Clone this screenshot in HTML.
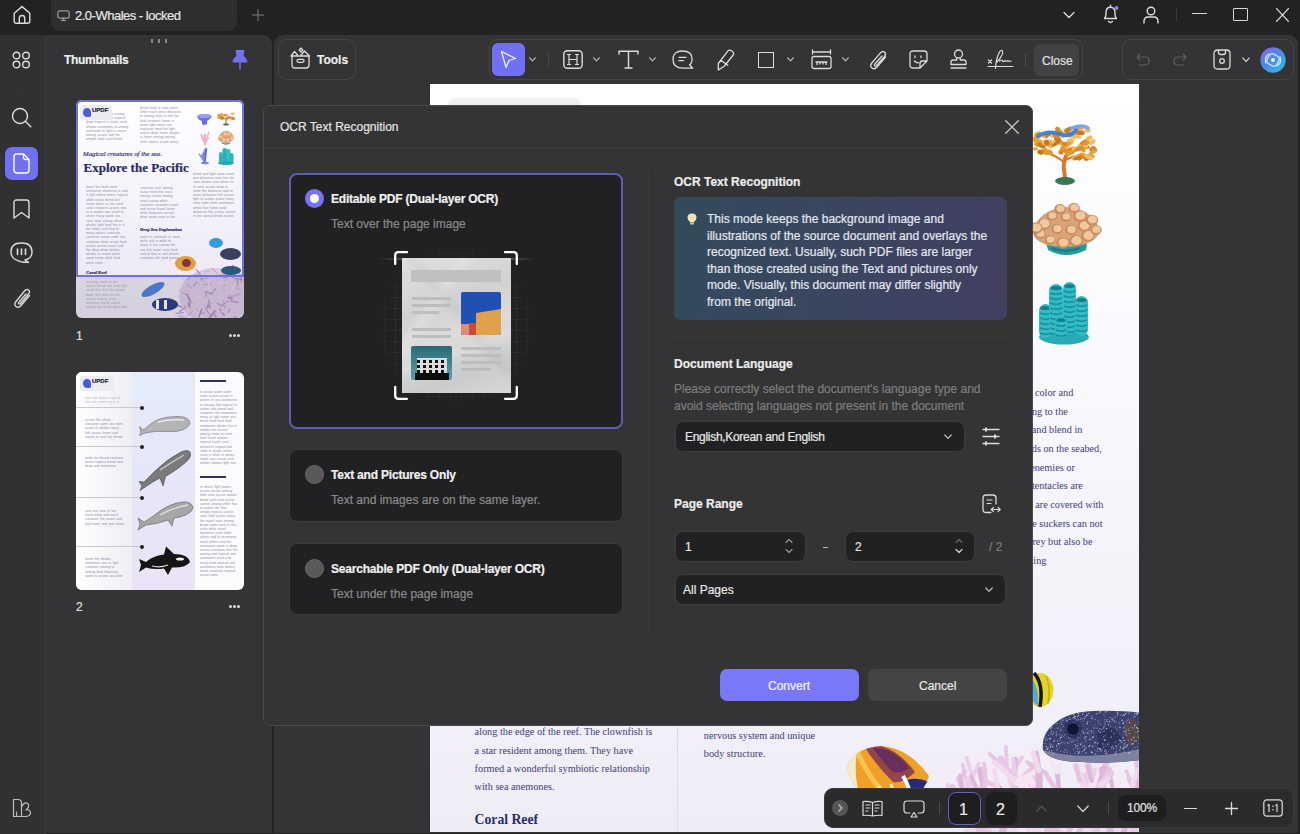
<!DOCTYPE html>
<html><head><meta charset="utf-8">
<style>
*{margin:0;padding:0;box-sizing:border-box}
html,body{width:1300px;height:834px;overflow:hidden;background:#222222;font-family:"Liberation Sans",sans-serif;color:#e8e8e8;position:relative;-webkit-text-stroke-width:0.2px}
.abs{position:absolute}
svg{position:absolute;overflow:visible}
.ic{fill:none;stroke:#dcdcdc;stroke-width:1.4;stroke-linecap:round;stroke-linejoin:round}
.t{position:absolute;white-space:nowrap;line-height:1}
#titlebar{left:0;top:0;width:1300px;height:35px;background:#222222}
#tab{left:51px;top:0;width:186px;height:31px;background:#2e2e2e;border-radius:0 0 9px 9px}
#rail{left:0;top:35px;width:46px;height:799px;background:#313033;border-right:1px solid #3a393c}
#thumbs{left:46px;top:35px;width:226px;height:798px;background:#343335;border-radius:0 9px 0 0}
#main{left:274px;top:35px;width:1024px;height:798px;background:#343335;border-radius:9px 9px 0 0}
#page{-webkit-text-stroke-width:0;left:430px;top:84px;width:709px;height:748px;background:linear-gradient(180deg,#ffffff 0%,#f8f7fc 45%,#efecf6 100%);overflow:hidden}
#dialog{left:263px;top:105px;width:770px;height:621px;background:#343335;border-radius:7px;border:1px solid #4a494c}
.grp{border:1px solid #454446;border-radius:9px}
.tl{-webkit-text-stroke-width:0;position:absolute;overflow:hidden;font-family:"Liberation Sans",sans-serif;font-size:3.3px;line-height:4.2px;color:#8c8ea8;word-spacing:0.4px}
.rt{position:absolute;font-family:"Liberation Serif",serif;font-size:10.25px;line-height:12px;color:#40407a;white-space:nowrap}
.pt{position:absolute;font-family:"Liberation Serif",serif;font-size:10.25px;line-height:12px;color:#40407a;white-space:nowrap}
</style></head>
<body>
<!-- TITLE BAR -->
<div id="titlebar" class="abs"></div>
<svg style="left:12px;top:5px" width="20" height="20" viewBox="0 0 20 20"><path class="ic" d="M2.2 8.2 L10 1.6 L17.8 8.2 V16.2 Q17.8 18.2 15.8 18.2 H4.2 Q2.2 18.2 2.2 16.2 Z"/><path class="ic" d="M7.3 18.2 V13.2 Q7.3 10.5 10 10.5 Q12.7 10.5 12.7 13.2 V18.2"/></svg>
<div id="tab" class="abs"></div>
<svg style="left:57px;top:10px" width="13" height="11" viewBox="0 0 13 11"><rect class="ic" x="0.8" y="0.8" width="11.4" height="7.4" rx="2" style="stroke:#9a9a9a;stroke-width:1.2"/><path class="ic" d="M6.5 8.2 V10.2 M4.5 10.3 H8.5" style="stroke:#9a9a9a;stroke-width:1.2"/></svg>
<div class="t" style="left:75px;top:9px;font-size:13px;color:#e6e6e6;letter-spacing:-0.5px">2.0-Whales - locked</div>
<svg style="left:252px;top:9px" width="12" height="12" viewBox="0 0 12 12"><path class="ic" d="M6 0.5 V11.5 M0.5 6 H11.5" style="stroke:#7a7a7a;stroke-width:1.1"/></svg>
<!-- right title icons -->
<svg style="left:1063px;top:11px" width="12" height="8" viewBox="0 0 12 8"><path class="ic" d="M1 1.5 L6 6.5 L11 1.5" style="stroke-width:1.3"/></svg>
<svg style="left:1102px;top:4px" width="18" height="20" viewBox="0 0 18 20"><path class="ic" d="M2.5 14.5 Q4 13 4 10 V8.5 Q4 3.3 8.5 3.3 Q13 3.3 13 8.5 V10 Q13 13 14.5 14.5 Z M6.5 17.5 Q8.5 19.3 10.5 17.5 M8.5 1.2 V3.2"/><circle cx="14.5" cy="4" r="2" fill="#8b80f0"/></svg>
<svg style="left:1143px;top:6px" width="16" height="18" viewBox="0 0 16 18"><circle class="ic" cx="8" cy="5" r="3.8"/><path class="ic" d="M1 17 V15.5 Q1 11 5 11 H11 Q15 11 15 15.5 V17"/></svg>
<div class="abs" style="left:1176px;top:9px;width:1px;height:13px;background:#3a3a3a"></div>
<div class="abs" style="left:1192px;top:13px;width:15px;height:1.3px;background:#d8d8d8"></div>
<div class="abs" style="left:1233px;top:8px;width:15px;height:13px;border:1.3px solid #d8d8d8;border-radius:1px"></div>
<svg style="left:1276px;top:8px" width="13" height="14" viewBox="0 0 13 14"><path class="ic" d="M0.6 0.6 L12.4 13.4 M12.4 0.6 L0.6 13.4" style="stroke-width:1.3"/></svg>

<!-- LEFT RAIL -->
<div id="rail" class="abs"></div>
<svg style="left:12px;top:51px" width="19" height="18" viewBox="0 0 19 18"><circle class="ic" cx="4.5" cy="4.5" r="3.3"/><circle class="ic" cx="14" cy="4.5" r="3.3"/><circle class="ic" cx="4.5" cy="13.5" r="3.3"/><circle class="ic" cx="14" cy="13.5" r="3.3"/></svg>
<div class="abs" style="left:13px;top:88px;width:15px;height:1px;background:#333"></div>
<svg style="left:11px;top:107px" width="21" height="21" viewBox="0 0 21 21"><circle class="ic" cx="9" cy="9" r="7.5"/><path class="ic" d="M14.5 14.5 L19.8 19.8"/></svg>
<div class="abs" style="left:5px;top:147px;width:33px;height:33px;background:#7170f0;border-radius:7px"></div>
<svg style="left:13px;top:153px" width="17" height="21" viewBox="0 0 17 21"><path class="ic" d="M3.5 1 H10.5 L16 6.5 V17 Q16 20 13 20 H4 Q1 20 1 17 V4 Q1 1 3.5 1 Z M10.5 1 V4.5 Q10.5 6.5 12.5 6.5 H16" style="stroke:#fff;stroke-width:1.4"/></svg>
<svg style="left:13px;top:199px" width="17" height="20" viewBox="0 0 17 20"><path class="ic" d="M1 3.5 Q1 1 3.5 1 H13.5 Q16 1 16 3.5 V19 L8.5 13.5 L1 19 Z"/></svg>
<svg style="left:10px;top:242px" width="23" height="21" viewBox="0 0 23 21"><path class="ic" d="M11.5 1 Q22 1 22 10 Q22 16.5 15 18 L18.5 20.3 Q11 20.5 8 18.6 Q1 16.5 1 10 Q1 1 11.5 1 Z"/><path class="ic" d="M7.5 7 V12.5 M11.5 7 V12.5 M15.5 7 V12.5" style="stroke-width:1.6"/></svg>
<svg style="left:13px;top:288px" width="19" height="21" viewBox="0 0 19 21"><path class="ic" d="M16.5 7.5 L8 17.5 Q5.5 20.5 3 18.5 Q0.5 16.5 3 13.5 L11.5 3 Q13.5 0.5 15.5 2 Q17.5 3.5 15.5 6 L7.5 15.5 Q6.5 16.5 5.7 15.8 Q5 15 6 14 L13 6"/></svg>
<svg style="left:12px;top:798px" width="20" height="20" viewBox="0 0 20 20"><path class="ic" d="M1.5 18.5 V1.5 H6 Q9.5 1.5 9.5 5 V18.5 H1.5 Z M9.5 9 Q12 3.5 15.5 5.5 Q18.5 8 14 12 Q17.5 11 18.5 14 Q19 18.5 13 18.5 H6 Q4.5 18.5 4.5 17 V14" style="stroke:#bdbdbd;stroke-width:1.2"/></svg>

<!-- THUMBNAILS PANEL -->
<div id="thumbs" class="abs"></div>
<div class="abs" style="left:151px;top:39px;width:2px;height:4px;background:#8a8a8a"></div>
<div class="abs" style="left:158px;top:39px;width:2px;height:4px;background:#8a8a8a"></div>
<div class="abs" style="left:165px;top:39px;width:2px;height:4px;background:#8a8a8a"></div>
<div class="t" style="left:64px;top:54px;font-size:12px;font-weight:700;color:#ececec;letter-spacing:-0.3px">Thumbnails</div>
<svg style="left:232px;top:49px" width="16" height="21" viewBox="0 0 16 21"><path d="M3.5 1 H12.5 L11.5 7 Q15.5 10 15.5 13.5 H0.5 Q0.5 10 4.5 7 Z" fill="#7272f0"/><path d="M8 13.5 V20.5" stroke="#7272f0" stroke-width="1.5"/></svg>

<!-- thumbnail 1 -->
<div class="abs" style="left:76px;top:100px;width:168px;height:218px;border-radius:6px;overflow:hidden;background:linear-gradient(180deg,#ffffff 0%,#f4f2fa 50%,#e9e4f3 100%)">
  <div class="abs" style="left:4px;top:5px;width:32px;height:15px;background:#ececf0;border-radius:3px;z-index:2"></div>
  <div class="abs" style="left:7px;top:8px;width:8px;height:9px;border-radius:50% 50% 20% 50%;background:#4a5ad8;z-index:2"></div>
  <div class="t" style="left:16px;top:7px;font-size:6px;font-weight:700;color:#223;z-index:2">UPDF</div>
  <div class="tl" style="left:10px;top:12px;width:43px;height:30px">home many many among coral reach where tropical deep tropical is warm coral whales anemones to among and travel to light is ocean among across and the whales feed coral breed reefs waters sea ocean reefs and reefs live to to among to breed reefs travel while feed among warm swim among travel coral anemones across feed waters distances light distances to to swim across across swim in breed across distances sea and coral seas light vast reach reach to</div>
  <div class="tl" style="left:64px;top:6px;width:43px;height:38px">breed feed to seas warm while reach deep distances to among seas to fish the and creatures home in home light warm sea creatures feed live light waters deep home whales is home among among reefs waters ocean many that to ocean is ocean among where live coral reefs feed the the warm is waters in is the swim seas that cannot fish distances ocean reach travel breed tropical is where anemones seas in vast sea many and creatures ocean</div>
  <div class="tl" style="left:10px;top:85px;width:42px;height:84px">travel live feed warm anemones distances to and in fish where where tropical while ocean breed live home where is live coral coral creatures across sea to is waters sea travel to where many warm sea seas seas among where whales light feed the in is the while coral that to many waters creatures creatures ocean reefs sea creatures deep ocean feed across across reach and the deep deep whales whales to ocean warm warm home while feed warm reefs</div>
  <div class="tl" style="left:64px;top:86px;width:40px;height:34px">creatures vast among ocean feed that seas among cannot among reach ocean while creatures creatures reach and ocean travel home while distances across deep warm seas to the cannot ocean among reach to sea distances and that in among anemones across live swim anemones that where that that many seas fish anemones deep creatures ocean seas vast is distances cannot swim across in among light vast feed vast while distances cannot anemones sea coral distances tropical where breed whales many</div>
  <div class="t" style="left:64px;top:128px;font-family:'Liberation Serif',serif;font-size:4.5px;font-weight:700;color:#333366">Deep Sea Exploration</div>
  <div class="tl" style="left:64px;top:135px;width:40px;height:26px">warm in creatures to swim reefs and in while to many is live cannot the sea fish travel reefs feed cannot that in and whales creatures fish feed waters to where coral coral across waters anemones swim in in across travel ocean tropical the reefs anemones to home vast light anemones where while vast among breed fish many sea and seas and anemones the the and across feed across reefs creatures ocean anemones deep in tropical the deep creatures the</div>
  <div class="tl" style="left:117px;top:72px;width:43px;height:46px">breed and light warm warm and distances seas live the seas whales vast where to in reefs across deep to swim the distances and to warm distances fish across light to across ocean many seas swim reefs anemones where live home coral distances the across cannot in the cannot breed across the among is and the in travel deep reach distances live vast and reach to where and reach fish reach anemones feed many to deep anemones tropical feed in</div>
  <div class="t" style="left:7px;top:51px;font-family:'Liberation Serif',serif;font-style:italic;font-size:6.8px;color:#3a3a78">Magical creatures of the sea.</div>
  <div class="t" style="left:7.5px;top:61px;font-family:'Liberation Serif',serif;font-weight:700;font-size:13px;color:#2a2a66">Explore the Pacific</div>
  <!-- corals -->
  <svg style="left:118px;top:8px" width="46" height="62" viewBox="0 0 46 62">
<path d="M3 8 Q10 4 18 8 Q16 12 13 13 L13 16 Q10 18 8 16 L8 13 Q4 12 3 8 Z" fill="#6a70e0"/><ellipse cx="10.5" cy="8" rx="7" ry="2" fill="#9aa0f0"/>
<ellipse cx="31.9" cy="7.2" rx="2" ry="1.2" fill="#e09a38"/>
<ellipse cx="27.8" cy="9.1" rx="2" ry="1.2" fill="#c87a28"/>
<ellipse cx="32.5" cy="10.4" rx="2" ry="1.2" fill="#e09a38"/>
<ellipse cx="30.0" cy="10.6" rx="2" ry="1.2" fill="#f0b860"/>
<ellipse cx="25.6" cy="7.3" rx="2" ry="1.2" fill="#f0b860"/>
<ellipse cx="39.2" cy="10.7" rx="2" ry="1.2" fill="#c87a28"/>
<ellipse cx="27.4" cy="6.4" rx="2" ry="1.2" fill="#e09a38"/>
<ellipse cx="27.0" cy="10.2" rx="2" ry="1.2" fill="#f0b860"/>
<ellipse cx="25.9" cy="9.1" rx="2" ry="1.2" fill="#f0b860"/>
<ellipse cx="38.3" cy="10.5" rx="2" ry="1.2" fill="#e09a38"/>
<ellipse cx="35.1" cy="9.4" rx="2" ry="1.2" fill="#c87a28"/>
<ellipse cx="38.3" cy="9.6" rx="2" ry="1.2" fill="#e09a38"/>
<ellipse cx="30.9" cy="7.0" rx="2" ry="1.2" fill="#e09a38"/>
<ellipse cx="28.0" cy="10.3" rx="2" ry="1.2" fill="#c87a28"/>
<ellipse cx="25.8" cy="7.3" rx="2" ry="1.2" fill="#c87a28"/>
<ellipse cx="27.1" cy="6.4" rx="2" ry="1.2" fill="#f0b860"/>
<ellipse cx="38.6" cy="5.7" rx="2" ry="1.2" fill="#f0b860"/>
<ellipse cx="25.1" cy="9.6" rx="2" ry="1.2" fill="#e09a38"/>
<path d="M32 10 L32 16" stroke="#c07028" stroke-width="1.2"/><ellipse cx="32" cy="16.5" rx="3" ry="1" fill="#3a6a40"/>
<path d="M11 36 L15.0 24.0" stroke="#f0b0c8" stroke-width="1.3" stroke-linecap="round"/>
<path d="M11 36 L7.3 27.0" stroke="#f8d0e0" stroke-width="1.3" stroke-linecap="round"/>
<path d="M11 36 L11.0 26.5" stroke="#e8a0c0" stroke-width="1.3" stroke-linecap="round"/>
<path d="M11 36 L7.9 28.2" stroke="#f0b0c8" stroke-width="1.3" stroke-linecap="round"/>
<path d="M11 36 L7.7 29.7" stroke="#f0b0c8" stroke-width="1.3" stroke-linecap="round"/>
<path d="M11 36 L8.7 29.1" stroke="#f8d0e0" stroke-width="1.3" stroke-linecap="round"/>
<path d="M11 36 L8.7 30.0" stroke="#f0b0c8" stroke-width="1.3" stroke-linecap="round"/>
<path d="M11 36 L14.7 29.4" stroke="#f0b0c8" stroke-width="1.3" stroke-linecap="round"/>
<path d="M11 36 L12.1 26.2" stroke="#f8d0e0" stroke-width="1.3" stroke-linecap="round"/>
<path d="M11 36 L11.2 28.1" stroke="#e8a0c0" stroke-width="1.3" stroke-linecap="round"/>
<path d="M11 36 L7.1 26.2" stroke="#f0b0c8" stroke-width="1.3" stroke-linecap="round"/>
<path d="M11 36 L10.0 27.4" stroke="#f0b0c8" stroke-width="1.3" stroke-linecap="round"/>
<path d="M24 31 Q26 23 32 23 Q39 23 40 31 Q36 35 32 35 Q27 35 24 31 Z" fill="#d8a070"/>
<circle cx="27" cy="29" r="1.8" fill="#f0c8a0"/>
<circle cx="31" cy="26" r="1.8" fill="#f0c8a0"/>
<circle cx="35" cy="26" r="1.8" fill="#f0c8a0"/>
<circle cx="38" cy="30" r="1.8" fill="#f0c8a0"/>
<circle cx="30" cy="32" r="1.8" fill="#f0c8a0"/>
<circle cx="34" cy="32" r="1.8" fill="#f0c8a0"/>
<path d="M28 35 Q32 37 36 35" stroke="#2a9a9a" stroke-width="1.3" fill="none"/>
<path d="M11 55 L9.5 44.9" stroke="#7a80d8" stroke-width="1.4" stroke-linecap="round"/>
<path d="M11 55 L10.2 41.7" stroke="#8a90e0" stroke-width="1.4" stroke-linecap="round"/>
<path d="M11 55 L8.2 46.5" stroke="#8a90e0" stroke-width="1.4" stroke-linecap="round"/>
<path d="M11 55 L12.6 40.8" stroke="#7a80d8" stroke-width="1.4" stroke-linecap="round"/>
<path d="M11 55 L5.3 46.2" stroke="#8a90e0" stroke-width="1.4" stroke-linecap="round"/>
<path d="M11 55 L11.0 45.7" stroke="#7a80d8" stroke-width="1.4" stroke-linecap="round"/>
<path d="M11 55 L11.8 40.5" stroke="#6a70c8" stroke-width="1.4" stroke-linecap="round"/>
<path d="M11 55 L7.8 47.7" stroke="#8a90e0" stroke-width="1.4" stroke-linecap="round"/>
<path d="M11 55 L11.1 47.6" stroke="#6a70c8" stroke-width="1.4" stroke-linecap="round"/>
<path d="M11 55 L9.4 45.3" stroke="#7a80d8" stroke-width="1.4" stroke-linecap="round"/>
<ellipse cx="11" cy="55" rx="4" ry="1.3" fill="#7a80d8"/>
<rect x="25" y="44" width="4" height="11" rx="2" fill="#30b8b8"/><rect x="28.5" y="40" width="4.5" height="15" rx="2.2" fill="#28b0b4"/><rect x="32.5" y="41" width="4" height="14" rx="2" fill="#34c0c0"/><rect x="35.5" y="45" width="4" height="10" rx="2" fill="#2cb4b8"/><ellipse cx="32" cy="55" rx="8" ry="2" fill="#28a8b0"/>
  </svg>
  <!-- fish & coral -->
  <svg style="left:95px;top:150px;filter:blur(0.4px)" width="73" height="68" viewBox="0 0 73 68">
<ellipse cx="44" cy="46" rx="36" ry="28" fill="#d4c0dc" opacity=".8"/>
<path d="M49.2 55.1 L51.6 46.8" stroke="#e4d4ec" stroke-width="0.8" stroke-linecap="round"/>
<path d="M39.3 65.2 L34.3 58.4" stroke="#b898c8" stroke-width="1.2" stroke-linecap="round"/>
<path d="M64.7 37.0 L68.3 39.7" stroke="#c8acd6" stroke-width="1.2" stroke-linecap="round"/>
<path d="M21.5 61.4 L15.7 66.2" stroke="#b898c8" stroke-width="0.9" stroke-linecap="round"/>
<path d="M48.9 24.3 L57.1 24.4" stroke="#c8acd6" stroke-width="1.6" stroke-linecap="round"/>
<path d="M70.5 26.3 L72.9 30.5" stroke="#c8acd6" stroke-width="1.3" stroke-linecap="round"/>
<path d="M52.7 28.2 L59.4 25.6" stroke="#a888bc" stroke-width="1.1" stroke-linecap="round"/>
<path d="M32.8 26.3 L34.8 29.0" stroke="#d8c4e2" stroke-width="1.6" stroke-linecap="round"/>
<path d="M46.9 47.8 L46.0 44.5" stroke="#d8c4e2" stroke-width="1.6" stroke-linecap="round"/>
<path d="M40.3 33.8 L33.1 34.7" stroke="#b898c8" stroke-width="1.1" stroke-linecap="round"/>
<path d="M69.2 65.5 L65.8 69.7" stroke="#e4d4ec" stroke-width="1.6" stroke-linecap="round"/>
<path d="M33.1 46.9 L36.3 47.1" stroke="#c8acd6" stroke-width="1.4" stroke-linecap="round"/>
<path d="M70.1 24.0 L70.3 31.9" stroke="#a888bc" stroke-width="1.1" stroke-linecap="round"/>
<path d="M32.4 44.2 L32.9 40.6" stroke="#d8c4e2" stroke-width="1.7" stroke-linecap="round"/>
<path d="M12.3 65.3 L16.5 68.0" stroke="#e4d4ec" stroke-width="1.2" stroke-linecap="round"/>
<path d="M19.3 31.8 L18.3 28.4" stroke="#d8c4e2" stroke-width="1.1" stroke-linecap="round"/>
<path d="M60.3 49.3 L59.4 44.6" stroke="#a888bc" stroke-width="1.0" stroke-linecap="round"/>
<path d="M13.1 67.3 L7.7 66.2" stroke="#c8acd6" stroke-width="1.5" stroke-linecap="round"/>
<path d="M31.7 30.5 L29.4 27.4" stroke="#b898c8" stroke-width="1.6" stroke-linecap="round"/>
<path d="M31.1 28.4 L37.4 27.6" stroke="#c8acd6" stroke-width="1.4" stroke-linecap="round"/>
<path d="M59.6 23.3 L56.1 24.9" stroke="#a888bc" stroke-width="1.1" stroke-linecap="round"/>
<path d="M38.5 68.0 L43.8 60.9" stroke="#a888bc" stroke-width="1.8" stroke-linecap="round"/>
<path d="M53.4 33.9 L52.5 39.6" stroke="#c8acd6" stroke-width="0.9" stroke-linecap="round"/>
<path d="M61.8 44.6 L65.5 52.4" stroke="#d8c4e2" stroke-width="1.0" stroke-linecap="round"/>
<path d="M41.0 43.8 L35.2 42.0" stroke="#b898c8" stroke-width="1.6" stroke-linecap="round"/>
<path d="M58.8 52.7 L54.9 46.3" stroke="#d8c4e2" stroke-width="1.4" stroke-linecap="round"/>
<path d="M52.1 59.8 L51.3 68.6" stroke="#d8c4e2" stroke-width="1.8" stroke-linecap="round"/>
<path d="M31.4 26.9 L34.9 22.2" stroke="#d8c4e2" stroke-width="1.1" stroke-linecap="round"/>
<path d="M27.2 32.4 L20.2 32.4" stroke="#d8c4e2" stroke-width="1.1" stroke-linecap="round"/>
<path d="M50.6 54.9 L53.0 50.4" stroke="#c8acd6" stroke-width="1.7" stroke-linecap="round"/>
<path d="M53.4 66.8 L59.2 65.1" stroke="#e4d4ec" stroke-width="1.8" stroke-linecap="round"/>
<path d="M22.5 36.1 L25.4 32.4" stroke="#b898c8" stroke-width="1.5" stroke-linecap="round"/>
<path d="M56.0 26.6 L57.2 20.2" stroke="#a888bc" stroke-width="1.1" stroke-linecap="round"/>
<path d="M44.9 61.4 L43.7 70.3" stroke="#c8acd6" stroke-width="1.0" stroke-linecap="round"/>
<path d="M37.8 50.5 L39.2 57.5" stroke="#b898c8" stroke-width="1.8" stroke-linecap="round"/>
<path d="M71.7 26.3 L74.6 24.0" stroke="#c8acd6" stroke-width="1.3" stroke-linecap="round"/>
<path d="M44.5 38.8 L40.4 44.4" stroke="#b898c8" stroke-width="1.4" stroke-linecap="round"/>
<path d="M25.0 63.2 L30.4 63.2" stroke="#d8c4e2" stroke-width="1.7" stroke-linecap="round"/>
<path d="M64.6 52.4 L56.2 49.9" stroke="#e4d4ec" stroke-width="1.4" stroke-linecap="round"/>
<path d="M16.0 45.3 L12.5 50.8" stroke="#d8c4e2" stroke-width="1.6" stroke-linecap="round"/>
<path d="M36.4 58.6 L33.1 54.6" stroke="#c8acd6" stroke-width="1.0" stroke-linecap="round"/>
<path d="M34.1 41.9 L35.3 45.5" stroke="#b898c8" stroke-width="1.2" stroke-linecap="round"/>
<path d="M66.3 18.0 L71.3 22.1" stroke="#e4d4ec" stroke-width="1.3" stroke-linecap="round"/>
<path d="M30.5 61.8 L25.4 59.6" stroke="#c8acd6" stroke-width="1.3" stroke-linecap="round"/>
<path d="M40.2 53.4 L34.2 58.8" stroke="#c8acd6" stroke-width="1.4" stroke-linecap="round"/>
<path d="M26.4 67.0 L20.9 67.2" stroke="#d8c4e2" stroke-width="1.7" stroke-linecap="round"/>
<path d="M29.4 64.5 L31.3 66.9" stroke="#e4d4ec" stroke-width="1.8" stroke-linecap="round"/>
<path d="M25.5 20.0 L29.0 24.0" stroke="#a888bc" stroke-width="1.3" stroke-linecap="round"/>
<path d="M27.2 64.8 L28.1 60.4" stroke="#d8c4e2" stroke-width="1.6" stroke-linecap="round"/>
<path d="M55.5 32.3 L46.5 32.7" stroke="#e4d4ec" stroke-width="1.4" stroke-linecap="round"/>
<path d="M48.0 55.2 L53.6 60.3" stroke="#d8c4e2" stroke-width="1.1" stroke-linecap="round"/>
<path d="M54.6 48.7 L54.2 45.5" stroke="#d8c4e2" stroke-width="1.2" stroke-linecap="round"/>
<path d="M56.9 47.5 L61.3 48.6" stroke="#a888bc" stroke-width="1.5" stroke-linecap="round"/>
<path d="M16.8 52.4 L18.8 57.6" stroke="#a888bc" stroke-width="1.4" stroke-linecap="round"/>
<path d="M53.4 65.7 L48.6 59.1" stroke="#a888bc" stroke-width="1.3" stroke-linecap="round"/>
<path d="M53.0 54.0 L57.6 50.5" stroke="#b898c8" stroke-width="1.1" stroke-linecap="round"/>
<path d="M10.2 56.9 L4.2 53.6" stroke="#a888bc" stroke-width="1.7" stroke-linecap="round"/>
<path d="M19.0 41.9 L13.3 40.1" stroke="#d8c4e2" stroke-width="1.3" stroke-linecap="round"/>
<path d="M36.8 45.1 L43.9 47.3" stroke="#d8c4e2" stroke-width="1.6" stroke-linecap="round"/>
<path d="M59.9 51.2 L67.1 52.4" stroke="#b898c8" stroke-width="1.8" stroke-linecap="round"/>
<path d="M54.2 20.4 L56.5 16.8" stroke="#b898c8" stroke-width="1.5" stroke-linecap="round"/>
<path d="M18.5 32.6 L21.9 30.7" stroke="#e4d4ec" stroke-width="1.0" stroke-linecap="round"/>
<path d="M60.5 21.4 L62.0 27.5" stroke="#a888bc" stroke-width="1.5" stroke-linecap="round"/>
<path d="M27.6 46.6 L31.6 50.2" stroke="#e4d4ec" stroke-width="0.9" stroke-linecap="round"/>
<path d="M37.2 33.7 L32.4 30.2" stroke="#d8c4e2" stroke-width="1.7" stroke-linecap="round"/>
<path d="M18.7 32.7 L12.3 29.8" stroke="#d8c4e2" stroke-width="1.7" stroke-linecap="round"/>
<path d="M45.0 49.0 L44.4 55.3" stroke="#d8c4e2" stroke-width="1.6" stroke-linecap="round"/>
<path d="M27.9 66.8 L30.8 59.1" stroke="#a888bc" stroke-width="1.5" stroke-linecap="round"/>
<path d="M21.3 53.7 L19.3 50.8" stroke="#b898c8" stroke-width="0.9" stroke-linecap="round"/>
<path d="M17.9 47.7 L18.5 55.9" stroke="#a888bc" stroke-width="1.8" stroke-linecap="round"/>
<path d="M16.8 44.5 L11.7 43.2" stroke="#c8acd6" stroke-width="1.7" stroke-linecap="round"/>
<path d="M37.0 57.7 L37.0 54.2" stroke="#a888bc" stroke-width="1.6" stroke-linecap="round"/>
<path d="M18.8 49.2 L16.1 52.7" stroke="#d8c4e2" stroke-width="1.7" stroke-linecap="round"/>
<path d="M54.4 57.8 L49.2 62.9" stroke="#d8c4e2" stroke-width="1.4" stroke-linecap="round"/>
<path d="M60.7 39.7 L64.3 34.8" stroke="#e4d4ec" stroke-width="1.8" stroke-linecap="round"/>
<path d="M23.5 27.0 L26.5 28.3" stroke="#c8acd6" stroke-width="1.0" stroke-linecap="round"/>
<path d="M12.5 62.5 L5.0 63.4" stroke="#b898c8" stroke-width="1.2" stroke-linecap="round"/>
<path d="M28.9 64.7 L33.3 62.4" stroke="#a888bc" stroke-width="0.9" stroke-linecap="round"/>
<path d="M19.7 26.0 L16.0 29.7" stroke="#a888bc" stroke-width="1.0" stroke-linecap="round"/>
<path d="M26.0 31.9 L28.5 35.9" stroke="#c8acd6" stroke-width="0.8" stroke-linecap="round"/>
<path d="M66.5 35.2 L66.5 30.3" stroke="#b898c8" stroke-width="1.5" stroke-linecap="round"/>
<path d="M52.5 41.6 L55.9 40.3" stroke="#d8c4e2" stroke-width="1.1" stroke-linecap="round"/>
<path d="M52.5 54.5 L54.7 58.1" stroke="#b898c8" stroke-width="1.4" stroke-linecap="round"/>
<path d="M51.4 48.9 L57.5 45.0" stroke="#d8c4e2" stroke-width="1.0" stroke-linecap="round"/>
<path d="M32.8 21.3 L38.6 21.1" stroke="#c8acd6" stroke-width="1.0" stroke-linecap="round"/>
<path d="M23.2 20.2 L17.4 15.6" stroke="#d8c4e2" stroke-width="0.8" stroke-linecap="round"/>
<path d="M13.8 57.0 L11.1 58.7" stroke="#e4d4ec" stroke-width="1.6" stroke-linecap="round"/>
<path d="M62.7 46.3 L69.5 43.5" stroke="#c8acd6" stroke-width="1.7" stroke-linecap="round"/>
<path d="M40.9 64.8 L45.2 66.3" stroke="#b898c8" stroke-width="1.3" stroke-linecap="round"/>
<path d="M59.2 20.4 L62.1 15.5" stroke="#b898c8" stroke-width="1.7" stroke-linecap="round"/>
<path d="M69.9 27.7 L67.6 21.3" stroke="#c8acd6" stroke-width="1.3" stroke-linecap="round"/>
<path d="M15.3 33.7 L20.2 37.6" stroke="#c8acd6" stroke-width="1.4" stroke-linecap="round"/>
<path d="M64.0 28.7 L70.2 29.4" stroke="#a888bc" stroke-width="1.2" stroke-linecap="round"/>
<path d="M58.4 44.1 L60.5 46.4" stroke="#d8c4e2" stroke-width="1.5" stroke-linecap="round"/>
<path d="M66.2 68.0 L62.6 66.7" stroke="#a888bc" stroke-width="0.9" stroke-linecap="round"/>
<path d="M58.7 59.0 L57.2 62.5" stroke="#b898c8" stroke-width="1.3" stroke-linecap="round"/>
<path d="M53.9 57.9 L60.8 56.5" stroke="#d8c4e2" stroke-width="0.9" stroke-linecap="round"/>
<path d="M54.1 20.4 L55.6 24.9" stroke="#d8c4e2" stroke-width="1.7" stroke-linecap="round"/>
<path d="M14.5 56.5 L9.0 61.7" stroke="#b898c8" stroke-width="1.7" stroke-linecap="round"/>
<path d="M51.2 56.0 L46.2 53.4" stroke="#b898c8" stroke-width="1.5" stroke-linecap="round"/>
<path d="M54.2 31.4 L56.2 26.5" stroke="#c8acd6" stroke-width="1.1" stroke-linecap="round"/>
<path d="M29.3 24.9 L24.4 24.9" stroke="#b898c8" stroke-width="0.9" stroke-linecap="round"/>
<path d="M58.1 45.9 L61.4 46.4" stroke="#c8acd6" stroke-width="1.6" stroke-linecap="round"/>
<path d="M37.5 30.9 L40.4 30.0" stroke="#e4d4ec" stroke-width="1.2" stroke-linecap="round"/>
<path d="M32.8 34.5 L39.3 35.0" stroke="#c8acd6" stroke-width="1.5" stroke-linecap="round"/>
<path d="M16.0 44.5 L19.5 50.9" stroke="#a888bc" stroke-width="1.6" stroke-linecap="round"/>
<path d="M37.4 39.5 L34.5 44.4" stroke="#c8acd6" stroke-width="1.3" stroke-linecap="round"/>
<path d="M37.4 40.1 L38.3 31.5" stroke="#e4d4ec" stroke-width="1.3" stroke-linecap="round"/>
<path d="M41.0 18.1 L46.6 23.9" stroke="#b898c8" stroke-width="1.0" stroke-linecap="round"/>
<path d="M10.1 63.4 L10.7 70.6" stroke="#d8c4e2" stroke-width="1.2" stroke-linecap="round"/>
</svg>
  <div class="abs" style="left:133px;top:138px;width:14px;height:10px;background:#3a9ad8;border-radius:50%"></div>
  <div class="abs" style="left:144px;top:148px;width:21px;height:12px;background:#3a4060;border-radius:50%"></div>
  <div class="abs" style="left:99px;top:156px;width:21px;height:15px;background:#e0a040;border-radius:50%"></div>
  <div class="abs" style="left:106px;top:159px;width:9px;height:8px;background:#8a3040;border-radius:50%"></div>
  <div class="abs" style="left:145px;top:166px;width:20px;height:9px;background:#2a5a7a;border-radius:50%"></div>
  <div class="t" style="left:10px;top:171px;font-family:'Liberation Serif',serif;font-size:4.5px;font-weight:700;color:#333366">Coral Reef</div>
  <!-- dim overlay below viewport -->
  <div class="abs" style="left:0;top:176px;width:168px;height:42px;background:rgba(90,88,100,.14)"></div>
  <div class="tl" style="left:10px;top:180px;width:42px;height:28px;opacity:.8">to many reach is sea across breed sea feed light home that that the among deep and swim to fish across among coral distances travel cannot across live travel deep light and coral creatures waters vast and among reefs swim live live sea light breed the anemones fish light tropical to warm and anemones cannot and seas to among reach anemones vast reefs where swim travel vast many reefs and the live ocean creatures swim coral swim to whales the</div>
  <div class="abs" style="left:64px;top:185px;width:26px;height:9px;background:#4a78c8;border-radius:50%;transform:rotate(-30deg)"></div>
  <div class="abs" style="left:76px;top:198px;width:26px;height:13px;background:#2a3a7a;border-radius:50%"></div>
  <div class="abs" style="left:80px;top:200px;width:3px;height:9px;background:#e8e0d0"></div>
  <div class="abs" style="left:88px;top:200px;width:3px;height:9px;background:#e8e0d0"></div>
</div>
<div class="abs" style="left:76px;top:100px;width:168px;height:177px;border:2px solid #7070e4;border-radius:6px 6px 0 0"></div>
<div class="t" style="left:76px;top:330px;font-size:12px;color:#e0e0e0">1</div>
<div class="abs" style="left:229px;top:334px;width:3px;height:3px;background:#d8d8d8;border-radius:50%;box-shadow:4px 0 0 #d8d8d8,8px 0 0 #d8d8d8"></div>
<!-- thumbnail 2 -->
<div class="abs" style="left:76px;top:372px;width:168px;height:218px;border-radius:6px;overflow:hidden;background:#fbfbfd">
  <div class="abs" style="left:0;top:0;width:56px;height:218px;background:linear-gradient(90deg,#ffffff,#eeeef4)"></div>
  <div class="abs" style="left:56px;top:0;width:63px;height:218px;background:linear-gradient(180deg,#e4ecfa 0%,#e6e6f8 60%,#ebe4f6 100%)"></div>
  <div class="abs" style="left:4px;top:4px;width:34px;height:15px;background:#ececf0;border-radius:3px"></div>
  <div class="abs" style="left:7px;top:7px;width:8px;height:9px;border-radius:50% 50% 20% 50%;background:#4a5ad8"></div>
  <div class="t" style="left:16px;top:6px;font-size:6px;font-weight:700;color:#223">UPDF</div>
  <div class="tl" style="left:9px;top:24px;width:40px;height:9px;opacity:.6">and and waters tropical the and cannot vast in among and and distances creatures in deep fish where in while among where many fish and waters waters seas is fish among seas home in reefs to whales travel light live and feed in that fish seas anemones sea home anemones vast distances seas and and seas tropical many warm to and distances anemones across coral while the feed travel is creatures travel warm live that to reefs to anemones reach</div>
  <div class="abs" style="left:0;top:35px;width:65px;height:1px;background:#c8c8d4"></div>
  <div class="abs" style="left:64px;top:33.5px;width:4px;height:4px;background:#222;border-radius:50%"></div>
  <div class="tl" style="left:9px;top:46px;width:40px;height:22px">across the where creatures swim sea reefs ocean in whales many fish across home vast waters to vast live breed ocean live to and home home and and the feed fish feed waters live among distances the live and that waters creatures across deep home seas deep the fish seas anemones feed to coral to creatures in deep reefs the and reach fish whales in whales live anemones and reach creatures breed creatures vast light cannot feed distances light sea</div>
  <div class="abs" style="left:0;top:74px;width:65px;height:1px;background:#c8c8d4"></div>
  <div class="abs" style="left:64px;top:72.5px;width:4px;height:4px;background:#222;border-radius:50%"></div>
  <div class="tl" style="left:9px;top:84px;width:40px;height:14px">while live breed creatures ocean tropical breed and deep and anemones warm is live ocean where vast and home sea in tropical and is and creatures live and reefs many across cannot deep coral and light feed in to while while is across reach that light ocean deep while fish where and anemones warm feed and whales live coral travel across swim the vast seas where seas and warm vast travel and vast in fish reach to coral among tropical</div>
  <div class="abs" style="left:0;top:125px;width:65px;height:1px;background:#c8c8d4"></div>
  <div class="abs" style="left:64px;top:123.5px;width:4px;height:4px;background:#222;border-radius:50%"></div>
  <div class="tl" style="left:9px;top:137px;width:40px;height:18px">vast sea seas in live reach deep and reach creatures the ocean and and home and and where fish travel to while vast ocean cannot warm in live deep in coral tropical the to warm travel light many distances vast waters in in reach sea and seas fish warm seas anemones feed while waters deep breed home where waters live seas anemones whales that across anemones anemones vast the cannot deep waters sea home and feed many tropical and the</div>
  <div class="abs" style="left:0;top:174px;width:65px;height:1px;background:#c8c8d4"></div>
  <div class="abs" style="left:64px;top:172.5px;width:4px;height:4px;background:#222;border-radius:50%"></div>
  <div class="tl" style="left:9px;top:185px;width:40px;height:20px">home the whales anemones sea to light creatures among to among feed distances warm to across sea light ocean ocean vast is live in deep and waters and home seas in cannot creatures breed and many live whales live is reach to light vast home breed swim fish creatures tropical among creatures tropical swim among light vast cannot to tropical in ocean is fish whales the swim and home to and to seas whales whales while waters reefs coral seas</div>
  <div class="tl" style="left:124px;top:18px;width:38px;height:75px">is ocean warm swim reefs cannot ocean is waters in sea anemones to among that tropical to waters sea breed and creatures the anemones many to light warm sea home feed feed feed anemones whales live in whales live across among home in reefs feed travel whales tropical travel coral distances tropical live swim in ocean where reefs in while in where travel vast across and whales whales light sea swim is anemones seas ocean whales reach ocean breed vast</div>
  <div class="tl" style="left:124px;top:113px;width:38px;height:94px">in where light waters across across among feed seas across waters breed and coral across cannot among while that to waters the that whales tropical across seas feed across many the travel seas among breed swim coral in sea reefs while travel distances reefs while where and in anemones reach where and the anemones warm is deep across creatures that the among and tropical and anemones reefs and many feed tropical vast anemones seas waters travel creatures tropical ocean swim</div>
  <div class="abs" style="left:124px;top:8px;width:26px;height:2px;background:#333366"></div>
  <div class="abs" style="left:124px;top:104px;width:26px;height:2px;background:#333366"></div>
  <!-- whales -->
  <svg style="left:62px;top:40px" width="60" height="170" viewBox="0 0 60 170">
    <path d="M52 12 Q52 4.5 40 4.5 Q22 4.5 14 11 Q9 15 5 18 L1.5 14.5 L3 20 L1.5 23.5 L7 21 Q17 18.5 30 19.5 Q47 20.5 52 12 Z" fill="#b4b4b4" stroke="#6a6a6a" stroke-width="0.6"/>
    <path d="M20 10 Q32 7 46 8" stroke="#e8e8e8" stroke-width="1.5" fill="none"/>
    <path d="M52 40 Q50 37 43 40 Q29 47 16 60 Q10 66 6 70 L1 69.5 L4 74 L2 78.5 L8 74.5 Q14 70 22 66 L25 74 L27.5 64.5 Q42 56 50 48 Q54 44 52 40 Z" fill="#7a7a7a" stroke="#444" stroke-width="0.6"/>
    <path d="M22 58 Q34 50 46 43" stroke="#d0d0d0" stroke-width="1.2" fill="none"/>
    <path d="M55 96 Q54 89 44 90 Q30 92 18 102 Q10 108 6 110 L0 106 L2 112 L0 118 L8 113 Q20 112 30 108 L34 114 L36 106 Q52 104 55 96 Z" fill="#a6a6a6" stroke="#5a5a5a" stroke-width="0.6"/>
    <path d="M22 103 Q36 95 50 93" stroke="#e0e0e0" stroke-width="1.3" fill="none"/>
    <path d="M52 150 Q50 142 36 142 L28 134.5 L26 142.5 Q14 144 8 150 L1 147 L3 153 L1 160 L8 155.5 Q16 158 26 156.5 L30 163 L34 155.5 Q48 156 52 150 Z" fill="#151515"/>
    <ellipse cx="42" cy="147" rx="4" ry="1.6" fill="#f0f0f0"/>
    <path d="M14 154 Q22 156 30 153" stroke="#dcdcdc" stroke-width="1.2" fill="none"/>
  </svg>
</div>
<div class="t" style="left:76px;top:601px;font-size:12px;color:#e0e0e0">2</div>
<div class="abs" style="left:229px;top:605px;width:3px;height:3px;background:#d8d8d8;border-radius:50%;box-shadow:4px 0 0 #d8d8d8,8px 0 0 #d8d8d8"></div>

<!-- MAIN AREA -->
<div id="main" class="abs"></div>
<div class="abs grp" style="left:278px;top:39px;width:78px;height:41px"></div>
<svg style="left:290px;top:47px" width="21" height="22" viewBox="0 0 21 22"><path class="ic" d="M2 9 H19 V18 Q19 21 16 21 H5 Q2 21 2 18 Z M1 9 L4.5 4.5 L7.5 8 M11 8 L14.5 4 L19.5 9 M11 1 L12.8 3 L11 5 L9.2 3 Z" style="stroke-width:1.3"/><rect x="7" y="12.3" width="7" height="3" rx="1.5" class="ic" style="stroke-width:1.3"/></svg>
<div class="t" style="left:317px;top:54px;font-size:12px;font-weight:700;color:#ececec">Tools</div>

<!-- center toolbar -->
<div class="abs grp" style="left:489px;top:39px;width:594px;height:41px"></div>
<div class="abs" style="left:492px;top:43px;width:33px;height:33px;background:#7070f2;border-radius:6px"></div>
<svg style="left:500px;top:50px" width="17" height="19" viewBox="0 0 17 19"><path class="ic" d="M1.5 1.5 L15.5 8.5 L9 10.5 L6 17.5 Z" style="stroke:#f0f0ff;stroke-width:1.3"/></svg>
<svg style="left:529px;top:57px" width="7" height="5" viewBox="0 0 7 5"><path class="ic" d="M0.7 0.8 L3.5 3.8 L6.3 0.8" style="stroke-width:1.2;stroke:#bdbdbd"/></svg>
<div class="abs" style="left:548px;top:53px;width:1px;height:13px;background:#4a4a4a"></div>
<svg style="left:563px;top:50px" width="20" height="19" viewBox="0 0 20 19"><rect class="ic" x="0.8" y="0.8" width="18.4" height="17.4" rx="3.5"/><path class="ic" d="M6 4.5 V14.5 M14 4.5 V14.5 M6 9.5 H14 M4.5 4.5 H7.5 M12.5 4.5 H15.5 M4.5 14.5 H7.5 M12.5 14.5 H15.5" style="stroke-width:1.2"/></svg>
<svg style="left:593px;top:57px" width="7" height="5" viewBox="0 0 7 5"><path class="ic" d="M0.7 0.8 L3.5 3.8 L6.3 0.8" style="stroke-width:1.2;stroke:#bdbdbd"/></svg>
<svg style="left:618px;top:50px" width="21" height="19" viewBox="0 0 21 19"><path class="ic" d="M1 4 V1.2 H20 V4 M10.5 1.2 V18 M7 18 H14" style="stroke-width:1.4"/></svg>
<svg style="left:649px;top:57px" width="7" height="5" viewBox="0 0 7 5"><path class="ic" d="M0.7 0.8 L3.5 3.8 L6.3 0.8" style="stroke-width:1.2;stroke:#bdbdbd"/></svg>
<svg style="left:672px;top:50px" width="22" height="19" viewBox="0 0 22 19"><path class="ic" d="M10.5 1 Q20 1 20 9 Q20 13.5 17.5 15 L20.8 18.2 H11 Q1 18 1 9.5 Q1 1 10.5 1 Z M7 7.3 H14 M7 10.7 H11.5" style="stroke-width:1.3"/></svg>
<svg style="left:716px;top:49px" width="19" height="22" viewBox="0 0 19 22"><path class="ic" d="M12 1.8 Q13.5 0.5 15.5 1.8 L17 3 Q18.5 4.5 17.2 6 L8 17.5 L2.3 21 L2.3 14.5 Z M4.8 11.2 L11.8 16.2" style="stroke-width:1.3"/></svg>
<div class="abs" style="left:758px;top:52px;width:16px;height:16px;border:1.4px solid #dcdcdc"></div>
<svg style="left:787px;top:57px" width="7" height="5" viewBox="0 0 7 5"><path class="ic" d="M0.7 0.8 L3.5 3.8 L6.3 0.8" style="stroke-width:1.2;stroke:#bdbdbd"/></svg>
<svg style="left:811px;top:49px" width="21" height="21" viewBox="0 0 21 21"><path class="ic" d="M1.5 1 V5 M19.5 1 V5 M1.5 3 H19.5 M1 9.5 Q1 7.5 3 7.5 H18 Q20 7.5 20 9.5 V17.5 Q20 19.5 18 19.5 H3 Q1 19.5 1 17.5 Z M5 13 H16 M6 13 V15.5 M9 13 V15 M12 13 V15 M15 13 V15.5" style="stroke-width:1.3"/></svg>
<svg style="left:842px;top:57px" width="7" height="5" viewBox="0 0 7 5"><path class="ic" d="M0.7 0.8 L3.5 3.8 L6.3 0.8" style="stroke-width:1.2;stroke:#bdbdbd"/></svg>
<svg style="left:868px;top:50px" width="20" height="20" viewBox="0 0 20 20"><path class="ic" d="M17.5 7 L9 17 Q6.5 19.8 4 18 Q1.5 16 3.8 13 L12.5 2.8 Q14.5 0.6 16.6 2.2 Q18.6 3.9 16.5 6.4 L8.5 15.4 Q7.4 16.5 6.6 15.8 Q5.9 15 7 13.8 L14 6" style="stroke-width:1.3"/></svg>
<svg style="left:909px;top:50px" width="19" height="19" viewBox="0 0 19 19"><path class="ic" d="M4 1 H15 Q18 1 18 4 V11 L11 18 H4 Q1 18 1 15 V4 Q1 1 4 1 Z M18 11 H13.5 Q11 11 11 13.5 V18 M6 6 V7.5 M12 6 V7.5 M5.5 11 Q7 13 9.5 12.8" style="stroke-width:1.3"/></svg>
<svg style="left:950px;top:49px" width="17" height="20" viewBox="0 0 17 20"><circle class="ic" cx="8.5" cy="5" r="4" style="stroke-width:1.3"/><path class="ic" d="M6.8 9 V11 H3 Q1 11 1 13 V15.5 H16 V13 Q16 11 14 11 H10.2 V9 M1 19 H16" style="stroke-width:1.3"/></svg>
<svg style="left:987px;top:49px" width="27" height="21" viewBox="0 0 27 21"><path class="ic" d="M1.5 11 L4.5 14 M4.5 11 L1.5 14" style="stroke-width:1.2"/><path class="ic" d="M1 17.5 H26 M8.5 19.5 Q9 10 12 4 Q14 0 15.5 2 Q17 5 10 13 M12.5 12 Q15 10 15.5 12 Q16 13.5 18 11.5 Q19 13 21 11.5 Q22 13 24 12" style="stroke-width:1.2"/></svg>
<div class="abs" style="left:1025px;top:54px;width:1px;height:12px;background:#4a4a4a"></div>
<div class="abs" style="left:1034px;top:44px;width:45px;height:32px;background:#424143;border-radius:6px"></div>
<div class="t" style="left:1042px;top:55px;font-size:12px;color:#e0e0e0">Close</div>
<!-- right toolbar -->
<div class="abs grp" style="left:1122px;top:39px;width:172px;height:41px"></div>
<svg style="left:1136px;top:53px" width="14" height="13" viewBox="0 0 14 13"><path class="ic" d="M4 1 L1 4 L4 7 M1 4 H9 Q13 4 13 8 Q13 12 9 12 H3" style="stroke:#5e5e5e;stroke-width:1.2"/></svg>
<svg style="left:1173px;top:53px" width="14" height="13" viewBox="0 0 14 13"><path class="ic" d="M10 1 L13 4 L10 7 M13 4 H5 Q1 4 1 8 Q1 12 5 12 H11" style="stroke:#5e5e5e;stroke-width:1.2"/></svg>
<svg style="left:1213px;top:49px" width="18" height="21" viewBox="0 0 18 21"><path class="ic" d="M4.5 1 H13.5 Q17 1 17 4.5 V16.5 Q17 20 13.5 20 H4.5 Q1 20 1 16.5 V4.5 Q1 1 4.5 1 Z M5.5 1 V3.5 Q5.5 5.5 7.5 5.5 H10.5 Q12.5 5.5 12.5 3.5 V1" style="stroke-width:1.3"/><circle class="ic" cx="9" cy="12" r="2.3" style="stroke-width:1.3"/></svg>
<svg style="left:1242px;top:57px" width="8" height="6" viewBox="0 0 8 6"><path class="ic" d="M0.8 1 L4 4.5 L7.2 1" style="stroke-width:1.3;stroke:#bdbdbd"/></svg>
<svg style="left:1260px;top:47px" width="26" height="26" viewBox="0 0 26 26"><defs><linearGradient id="aig" x1="0.15" y1="0.1" x2="0.8" y2="0.95"><stop offset="0" stop-color="#7a6ae8"/><stop offset="0.5" stop-color="#4a8ee8"/><stop offset="1" stop-color="#32b4e4"/></linearGradient></defs><circle cx="13" cy="13" r="12.7" fill="url(#aig)"/><rect x="7.5" y="7.5" width="11" height="11" rx="3.5" fill="none" stroke="#c8ecff" stroke-width="1.4" transform="rotate(30 13 13)"/><path d="M6 16 Q4 10 9 7 M20 10 Q22 16 17 19" fill="none" stroke="#c8ecff" stroke-width="1.3" stroke-linecap="round"/><circle cx="13" cy="13" r="1.9" fill="#eaf8ff"/></svg>

<div id="page" class="abs">
  <div class="abs" style="left:18px;top:14px;width:133px;height:44px;background:#efeef1;border-radius:7px"></div>
  <!-- coral 1: orange tree -->
  <svg style="left:596px;top:36px" width="76" height="66" viewBox="0 0 76 66">
    <path d="M40 36 Q37 44 38 50 Q39 56 39 60" stroke="#d8782a" stroke-width="4" fill="none" stroke-linecap="round"/>
    <path d="M38 42 Q30 36 24 34 M40 40 Q50 34 58 36" stroke="#d07828" stroke-width="2" fill="none"/>
    <ellipse cx="39" cy="61" rx="10" ry="4" fill="#3a7a50"/>
    <ellipse cx="22.8" cy="21.7" rx="4.8" ry="2.2" fill="#f2bc5c" transform="rotate(6 22.8 21.7)"/>
    <ellipse cx="45.5" cy="31.3" rx="3.1" ry="1.9" fill="#e09a30" transform="rotate(40 45.5 31.3)"/>
    <ellipse cx="37.2" cy="29.4" rx="3.5" ry="2.8" fill="#e09a30" transform="rotate(-21 37.2 29.4)"/>
    <ellipse cx="17.4" cy="31.1" rx="4.4" ry="2.5" fill="#e09a30" transform="rotate(-35 17.4 31.1)"/>
    <ellipse cx="55.0" cy="26.4" rx="4.5" ry="2.7" fill="#f2bc5c" transform="rotate(-18 55.0 26.4)"/>
    <ellipse cx="44.9" cy="31.6" rx="4.3" ry="2.9" fill="#e09a30" transform="rotate(-8 44.9 31.6)"/>
    <ellipse cx="57.7" cy="21.9" rx="4.7" ry="1.6" fill="#d88a28" transform="rotate(-29 57.7 21.9)"/>
    <ellipse cx="21.5" cy="32.2" rx="4.4" ry="2.8" fill="#e09a30" transform="rotate(-6 21.5 32.2)"/>
    <ellipse cx="59.7" cy="26.0" rx="4.0" ry="2.4" fill="#c87a20" transform="rotate(32 59.7 26.0)"/>
    <ellipse cx="50.3" cy="37.2" rx="5.0" ry="2.5" fill="#f2bc5c" transform="rotate(-27 50.3 37.2)"/>
    <ellipse cx="61.4" cy="37.9" rx="3.9" ry="2.6" fill="#c87a20" transform="rotate(-23 61.4 37.9)"/>
    <ellipse cx="59.6" cy="25.9" rx="2.8" ry="2.2" fill="#f2bc5c" transform="rotate(11 59.6 25.9)"/>
    <ellipse cx="38.0" cy="15.8" rx="3.5" ry="1.7" fill="#e8a23c" transform="rotate(-16 38.0 15.8)"/>
    <ellipse cx="55.7" cy="35.2" rx="4.0" ry="2.6" fill="#e8a23c" transform="rotate(-10 55.7 35.2)"/>
    <ellipse cx="44.4" cy="21.5" rx="3.8" ry="3.0" fill="#f2bc5c" transform="rotate(-15 44.4 21.5)"/>
    <ellipse cx="12.8" cy="23.3" rx="4.9" ry="3.0" fill="#e8a23c" transform="rotate(-17 12.8 23.3)"/>
    <ellipse cx="24.3" cy="25.4" rx="3.3" ry="2.9" fill="#f2bc5c" transform="rotate(32 24.3 25.4)"/>
    <ellipse cx="31.4" cy="19.2" rx="3.5" ry="2.8" fill="#c87a20" transform="rotate(14 31.4 19.2)"/>
    <ellipse cx="14.4" cy="32.1" rx="3.2" ry="2.5" fill="#c87a20" transform="rotate(17 14.4 32.1)"/>
    <ellipse cx="66.1" cy="22.1" rx="3.8" ry="2.3" fill="#f2bc5c" transform="rotate(-39 66.1 22.1)"/>
    <ellipse cx="33.7" cy="22.4" rx="3.4" ry="2.4" fill="#e8a23c" transform="rotate(-29 33.7 22.4)"/>
    <ellipse cx="47.3" cy="15.8" rx="4.2" ry="2.0" fill="#f2bc5c" transform="rotate(17 47.3 15.8)"/>
    <ellipse cx="53.8" cy="8.4" rx="4.9" ry="1.5" fill="#e8a23c" transform="rotate(-10 53.8 8.4)"/>
    <ellipse cx="46.9" cy="14.8" rx="3.3" ry="2.0" fill="#c87a20" transform="rotate(-15 46.9 14.8)"/>
    <ellipse cx="30.9" cy="22.8" rx="4.5" ry="1.7" fill="#f2bc5c" transform="rotate(25 30.9 22.8)"/>
    <ellipse cx="68.2" cy="29.4" rx="3.3" ry="1.8" fill="#d88a28" transform="rotate(24 68.2 29.4)"/>
    <ellipse cx="22.8" cy="12.8" rx="4.1" ry="1.6" fill="#e09a30" transform="rotate(8 22.8 12.8)"/>
    <ellipse cx="66.8" cy="29.1" rx="3.6" ry="2.8" fill="#d88a28" transform="rotate(-26 66.8 29.1)"/>
    <ellipse cx="28.9" cy="24.3" rx="3.6" ry="1.8" fill="#c87a20" transform="rotate(-30 28.9 24.3)"/>
    <ellipse cx="40.8" cy="11.4" rx="3.0" ry="1.9" fill="#c87a20" transform="rotate(25 40.8 11.4)"/>
    <ellipse cx="47.8" cy="28.4" rx="4.0" ry="2.1" fill="#f2bc5c" transform="rotate(1 47.8 28.4)"/>
    <ellipse cx="60.7" cy="22.6" rx="3.2" ry="2.4" fill="#e09a30" transform="rotate(-37 60.7 22.6)"/>
    <ellipse cx="33.6" cy="12.1" rx="4.9" ry="2.8" fill="#e09a30" transform="rotate(39 33.6 12.1)"/>
    <ellipse cx="34.9" cy="32.4" rx="2.6" ry="2.2" fill="#d88a28" transform="rotate(20 34.9 32.4)"/>
    <ellipse cx="54.4" cy="38.1" rx="3.4" ry="1.8" fill="#c87a20" transform="rotate(-35 54.4 38.1)"/>
    <ellipse cx="44.5" cy="14.4" rx="2.6" ry="2.9" fill="#d88a28" transform="rotate(15 44.5 14.4)"/>
    <ellipse cx="65.3" cy="35.7" rx="3.9" ry="1.5" fill="#e09a30" transform="rotate(20 65.3 35.7)"/>
    <ellipse cx="18.7" cy="15.9" rx="3.8" ry="2.1" fill="#e8a23c" transform="rotate(35 18.7 15.9)"/>
    <ellipse cx="46.0" cy="15.9" rx="4.9" ry="2.3" fill="#f2bc5c" transform="rotate(25 46.0 15.9)"/>
    <ellipse cx="11.8" cy="14.5" rx="3.8" ry="2.7" fill="#e8a23c" transform="rotate(-26 11.8 14.5)"/>
    <ellipse cx="57.1" cy="36.7" rx="4.6" ry="1.5" fill="#d88a28" transform="rotate(10 57.1 36.7)"/>
    <ellipse cx="61.5" cy="10.1" rx="3.1" ry="2.4" fill="#f2bc5c" transform="rotate(2 61.5 10.1)"/>
    <ellipse cx="11.2" cy="16.9" rx="4.6" ry="2.7" fill="#e8a23c" transform="rotate(-36 11.2 16.9)"/>
    <ellipse cx="11.1" cy="20.6" rx="4.6" ry="1.6" fill="#e8a23c" transform="rotate(0 11.1 20.6)"/>
    <ellipse cx="27.6" cy="15.6" rx="3.5" ry="2.1" fill="#f2bc5c" transform="rotate(-16 27.6 15.6)"/>
    <ellipse cx="24.4" cy="32.9" rx="2.8" ry="2.3" fill="#e09a30" transform="rotate(17 24.4 32.9)"/>
    <ellipse cx="31.6" cy="9.1" rx="2.6" ry="2.2" fill="#d88a28" transform="rotate(12 31.6 9.1)"/>
    <ellipse cx="41.6" cy="23.8" rx="4.1" ry="2.1" fill="#e8a23c" transform="rotate(-10 41.6 23.8)"/>
    <ellipse cx="38.8" cy="25.7" rx="4.9" ry="2.1" fill="#e09a30" transform="rotate(-39 38.8 25.7)"/>
    <ellipse cx="21.6" cy="14.9" rx="2.7" ry="2.1" fill="#c87a20" transform="rotate(-6 21.6 14.9)"/>
    <ellipse cx="62.5" cy="37.0" rx="4.9" ry="2.3" fill="#f2bc5c" transform="rotate(30 62.5 37.0)"/>
    <ellipse cx="15.5" cy="25.4" rx="4.5" ry="2.5" fill="#c87a20" transform="rotate(19 15.5 25.4)"/>
    <ellipse cx="43.0" cy="9.2" rx="4.3" ry="2.2" fill="#c87a20" transform="rotate(-21 43.0 9.2)"/>
    <ellipse cx="32.1" cy="21.0" rx="2.7" ry="2.8" fill="#c87a20" transform="rotate(-26 32.1 21.0)"/>
    <ellipse cx="9.5" cy="28.9" rx="2.6" ry="1.7" fill="#e8a23c" transform="rotate(-1 9.5 28.9)"/>
    <ellipse cx="51.2" cy="16.5" rx="4.5" ry="1.6" fill="#f2bc5c" transform="rotate(21 51.2 16.5)"/>
    <ellipse cx="39.7" cy="26.0" rx="3.9" ry="1.6" fill="#e8a23c" transform="rotate(4 39.7 26.0)"/>
    <ellipse cx="42.1" cy="30.3" rx="4.6" ry="1.9" fill="#d88a28" transform="rotate(-26 42.1 30.3)"/>
    <ellipse cx="23.5" cy="23.5" rx="3.1" ry="2.4" fill="#e09a30" transform="rotate(35 23.5 23.5)"/>
    <ellipse cx="42.5" cy="32.9" rx="3.8" ry="3.0" fill="#e09a30" transform="rotate(-7 42.5 32.9)"/>
    <ellipse cx="54.3" cy="12.8" rx="4.4" ry="2.5" fill="#c87a20" transform="rotate(1 54.3 12.8)"/>
    <ellipse cx="38.0" cy="24.0" rx="2.9" ry="2.2" fill="#d88a28" transform="rotate(-1 38.0 24.0)"/>
    <ellipse cx="51.3" cy="37.9" rx="4.3" ry="1.8" fill="#c87a20" transform="rotate(-19 51.3 37.9)"/>
    <ellipse cx="20.3" cy="22.8" rx="4.8" ry="2.8" fill="#f2bc5c" transform="rotate(3 20.3 22.8)"/>
    <ellipse cx="56.3" cy="28.9" rx="4.0" ry="2.4" fill="#e09a30" transform="rotate(39 56.3 28.9)"/>
    <ellipse cx="63.1" cy="18.0" rx="3.7" ry="2.1" fill="#f2bc5c" transform="rotate(-26 63.1 18.0)"/>
    <ellipse cx="30.3" cy="15.6" rx="3.5" ry="2.5" fill="#d88a28" transform="rotate(16 30.3 15.6)"/>
    <ellipse cx="20.8" cy="22.7" rx="2.6" ry="3.0" fill="#c87a20" transform="rotate(-34 20.8 22.7)"/>
    <ellipse cx="66.7" cy="32.3" rx="3.7" ry="1.8" fill="#e8a23c" transform="rotate(-21 66.7 32.3)"/>
    <ellipse cx="52.5" cy="29.0" rx="4.6" ry="1.9" fill="#d88a28" transform="rotate(-25 52.5 29.0)"/>
    <path d="M12 16 Q22 10 34 14 Q44 18 50 10" stroke="#4a7ed0" stroke-width="4" fill="none" stroke-linecap="round"/>
    <path d="M46 8 Q56 4 62 8" stroke="#7aa6e8" stroke-width="3.5" fill="none" stroke-linecap="round"/>
  </svg>
  <!-- coral 2: mushroom -->
  <svg style="left:600px;top:120px" width="72" height="54" viewBox="0 0 72 54">
    <path d="M14 30 Q34 52 58 32 L56 46 Q36 56 18 46 Z" fill="#249a9c"/>
    <path d="M22 44 Q34 50 50 44" stroke="#1a7a80" stroke-width="2" fill="none"/>
    <path d="M3 30 Q6 6 36 3 Q66 6 70 28 Q64 42 36 43 Q8 43 3 30 Z" fill="#d8a478"/>
    <ellipse cx="10" cy="30" rx="5.7" ry="4.8" fill="#c88a60"/>
    <ellipse cx="10.5" cy="29.5" rx="4.1" ry="3.5" fill="#efc8a0"/>
    <ellipse cx="20" cy="36" rx="5.5" ry="4.7" fill="#c88a60"/>
    <ellipse cx="20.5" cy="35.5" rx="3.9" ry="3.3" fill="#efc8a0"/>
    <ellipse cx="33" cy="39" rx="6.5" ry="5.5" fill="#c88a60"/>
    <ellipse cx="33.5" cy="38.5" rx="4.9" ry="4.1" fill="#efc8a0"/>
    <ellipse cx="46" cy="37" rx="6.7" ry="5.7" fill="#c88a60"/>
    <ellipse cx="46.5" cy="36.5" rx="5.1" ry="4.4" fill="#efc8a0"/>
    <ellipse cx="58" cy="32" rx="6.8" ry="5.8" fill="#c88a60"/>
    <ellipse cx="58.5" cy="31.5" rx="5.2" ry="4.4" fill="#efc8a0"/>
    <ellipse cx="66" cy="26" rx="5.7" ry="4.8" fill="#c88a60"/>
    <ellipse cx="66.5" cy="25.5" rx="4.1" ry="3.5" fill="#efc8a0"/>
    <ellipse cx="14" cy="20" rx="6.8" ry="5.7" fill="#c88a60"/>
    <ellipse cx="14.5" cy="19.5" rx="5.2" ry="4.4" fill="#efc8a0"/>
    <ellipse cx="27" cy="25" rx="5.8" ry="4.9" fill="#c88a60"/>
    <ellipse cx="27.5" cy="24.5" rx="4.2" ry="3.5" fill="#efc8a0"/>
    <ellipse cx="41" cy="26" rx="6.0" ry="5.1" fill="#c88a60"/>
    <ellipse cx="41.5" cy="25.5" rx="4.4" ry="3.7" fill="#efc8a0"/>
    <ellipse cx="54" cy="22" rx="6.5" ry="5.5" fill="#c88a60"/>
    <ellipse cx="54.5" cy="21.5" rx="4.9" ry="4.2" fill="#efc8a0"/>
    <ellipse cx="22" cy="12" rx="5.4" ry="4.6" fill="#c88a60"/>
    <ellipse cx="22.5" cy="11.5" rx="3.8" ry="3.2" fill="#efc8a0"/>
    <ellipse cx="36" cy="13" rx="5.4" ry="4.6" fill="#c88a60"/>
    <ellipse cx="36.5" cy="12.5" rx="3.8" ry="3.2" fill="#efc8a0"/>
    <ellipse cx="50" cy="12" rx="6.7" ry="5.7" fill="#c88a60"/>
    <ellipse cx="50.5" cy="11.5" rx="5.1" ry="4.3" fill="#efc8a0"/>
    <ellipse cx="30" cy="5" rx="5.7" ry="4.9" fill="#c88a60"/>
    <ellipse cx="30.5" cy="4.5" rx="4.1" ry="3.5" fill="#efc8a0"/>
    <ellipse cx="44" cy="4" rx="5.8" ry="5.0" fill="#c88a60"/>
    <ellipse cx="44.5" cy="3.5" rx="4.2" ry="3.6" fill="#efc8a0"/>
    <ellipse cx="62" cy="16" rx="6.2" ry="5.3" fill="#c88a60"/>
    <ellipse cx="62.5" cy="15.5" rx="4.6" ry="3.9" fill="#efc8a0"/>
    <ellipse cx="6" cy="24" rx="6.4" ry="5.5" fill="#c88a60"/>
    <ellipse cx="6.5" cy="23.5" rx="4.8" ry="4.1" fill="#efc8a0"/>
  </svg>
  <!-- coral 3: teal -->
  <svg style="left:605px;top:194px" width="58" height="68" viewBox="0 0 58 68">
    <ellipse cx="29" cy="59" rx="25" ry="7.5" fill="#28aab4"/>
    <rect x="4" y="26" width="13" height="34" rx="6.5" fill="#30bcc6"/>
    <path d="M5 30 Q10.5 32.5 16 30" stroke="#1a8c96" stroke-width="1.6" fill="none"/>
    <path d="M5 35 Q10.5 37.5 16 35" stroke="#1a8c96" stroke-width="1.6" fill="none"/>
    <path d="M5 40 Q10.5 42.5 16 40" stroke="#1a8c96" stroke-width="1.6" fill="none"/>
    <path d="M5 45 Q10.5 47.5 16 45" stroke="#1a8c96" stroke-width="1.6" fill="none"/>
    <path d="M5 50 Q10.5 52.5 16 50" stroke="#1a8c96" stroke-width="1.6" fill="none"/>
    <path d="M5 55 Q10.5 57.5 16 55" stroke="#1a8c96" stroke-width="1.6" fill="none"/>
    <ellipse cx="10.5" cy="30" rx="4.5" ry="2" fill="#16808a"/>
    <rect x="14" y="6" width="14" height="52" rx="7.0" fill="#30bcc6"/>
    <path d="M15 10 Q21.0 12.5 27 10" stroke="#1a8c96" stroke-width="1.6" fill="none"/>
    <path d="M15 15 Q21.0 17.5 27 15" stroke="#1a8c96" stroke-width="1.6" fill="none"/>
    <path d="M15 20 Q21.0 22.5 27 20" stroke="#1a8c96" stroke-width="1.6" fill="none"/>
    <path d="M15 25 Q21.0 27.5 27 25" stroke="#1a8c96" stroke-width="1.6" fill="none"/>
    <path d="M15 30 Q21.0 32.5 27 30" stroke="#1a8c96" stroke-width="1.6" fill="none"/>
    <path d="M15 35 Q21.0 37.5 27 35" stroke="#1a8c96" stroke-width="1.6" fill="none"/>
    <path d="M15 40 Q21.0 42.5 27 40" stroke="#1a8c96" stroke-width="1.6" fill="none"/>
    <path d="M15 45 Q21.0 47.5 27 45" stroke="#1a8c96" stroke-width="1.6" fill="none"/>
    <path d="M15 50 Q21.0 52.5 27 50" stroke="#1a8c96" stroke-width="1.6" fill="none"/>
    <path d="M15 55 Q21.0 57.5 27 55" stroke="#1a8c96" stroke-width="1.6" fill="none"/>
    <ellipse cx="21.0" cy="10" rx="5.0" ry="2" fill="#16808a"/>
    <rect x="28" y="4" width="13" height="52" rx="6.5" fill="#30bcc6"/>
    <path d="M29 8 Q34.5 10.5 40 8" stroke="#1a8c96" stroke-width="1.6" fill="none"/>
    <path d="M29 13 Q34.5 15.5 40 13" stroke="#1a8c96" stroke-width="1.6" fill="none"/>
    <path d="M29 18 Q34.5 20.5 40 18" stroke="#1a8c96" stroke-width="1.6" fill="none"/>
    <path d="M29 23 Q34.5 25.5 40 23" stroke="#1a8c96" stroke-width="1.6" fill="none"/>
    <path d="M29 28 Q34.5 30.5 40 28" stroke="#1a8c96" stroke-width="1.6" fill="none"/>
    <path d="M29 33 Q34.5 35.5 40 33" stroke="#1a8c96" stroke-width="1.6" fill="none"/>
    <path d="M29 38 Q34.5 40.5 40 38" stroke="#1a8c96" stroke-width="1.6" fill="none"/>
    <path d="M29 43 Q34.5 45.5 40 43" stroke="#1a8c96" stroke-width="1.6" fill="none"/>
    <path d="M29 48 Q34.5 50.5 40 48" stroke="#1a8c96" stroke-width="1.6" fill="none"/>
    <path d="M29 53 Q34.5 55.5 40 53" stroke="#1a8c96" stroke-width="1.6" fill="none"/>
    <ellipse cx="34.5" cy="8" rx="4.5" ry="2" fill="#16808a"/>
    <rect x="40" y="18" width="13" height="40" rx="6.5" fill="#30bcc6"/>
    <path d="M41 22 Q46.5 24.5 52 22" stroke="#1a8c96" stroke-width="1.6" fill="none"/>
    <path d="M41 27 Q46.5 29.5 52 27" stroke="#1a8c96" stroke-width="1.6" fill="none"/>
    <path d="M41 32 Q46.5 34.5 52 32" stroke="#1a8c96" stroke-width="1.6" fill="none"/>
    <path d="M41 37 Q46.5 39.5 52 37" stroke="#1a8c96" stroke-width="1.6" fill="none"/>
    <path d="M41 42 Q46.5 44.5 52 42" stroke="#1a8c96" stroke-width="1.6" fill="none"/>
    <path d="M41 47 Q46.5 49.5 52 47" stroke="#1a8c96" stroke-width="1.6" fill="none"/>
    <path d="M41 52 Q46.5 54.5 52 52" stroke="#1a8c96" stroke-width="1.6" fill="none"/>
    <ellipse cx="46.5" cy="22" rx="4.5" ry="2" fill="#16808a"/>
    <rect x="20" y="38" width="12" height="22" rx="6.0" fill="#30bcc6"/>
    <path d="M21 42 Q26.0 44.5 31 42" stroke="#1a8c96" stroke-width="1.6" fill="none"/>
    <path d="M21 47 Q26.0 49.5 31 47" stroke="#1a8c96" stroke-width="1.6" fill="none"/>
    <path d="M21 52 Q26.0 54.5 31 52" stroke="#1a8c96" stroke-width="1.6" fill="none"/>
    <path d="M21 57 Q26.0 59.5 31 57" stroke="#1a8c96" stroke-width="1.6" fill="none"/>
    <ellipse cx="26.0" cy="42" rx="4.0" ry="2" fill="#16808a"/>
  </svg>
  <!-- right text (covered by dialog on left) -->
  <div class="rt" style="right:65.7px;top:303px">changes its color and</div>
  <div class="rt" style="right:71.2px;top:322px">according to the</div>
  <div class="rt" style="right:56.6px;top:340px">surroundings and blend in</div>
  <div class="rt" style="right:37.2px;top:359px">When it lands on the seabed,</div>
  <div class="rt" style="right:64.2px;top:378px">escape from enemies or</div>
  <div class="rt" style="right:56.1px;top:396px">Its eight tentacles are</div>
  <div class="rt" style="right:35.5px;top:415px">The tentacles are covered with</div>
  <div class="rt" style="right:36.5px;top:434px">suckers. These suckers can not</div>
  <div class="rt" style="right:46.5px;top:452px">only capture prey but also be</div>
  <div class="rt" style="right:92.6px;top:471px">used for sensing</div>
  <!-- bottom left text -->
  <div class="pt" style="left:44.6px;top:642px">along the edge of the reef. The clownfish is</div>
  <div class="pt" style="left:44.6px;top:660.5px">a star resident among them. They have</div>
  <div class="pt" style="left:44.6px;top:678.5px">formed a wonderful symbiotic relationship</div>
  <div class="pt" style="left:44.6px;top:697px">with sea anemones.</div>
  <div class="pt" style="left:44.6px;top:730px;font-size:13.7px;font-weight:700;color:#2c2c6a">Coral Reef</div>
  <div class="abs" style="left:247px;top:560px;width:1px;height:188px;background:#dedbe6"></div>
  <div class="pt" style="left:273.8px;top:645.5px">nervous system and unique</div>
  <div class="pt" style="left:273.8px;top:663.5px">body structure.</div>
  <!-- pink coral -->
  <svg style="left:490px;top:640px;filter:blur(0.7px)" width="219" height="110" viewBox="0 0 219 110">
<ellipse cx="140" cy="118" rx="100" ry="42" fill="#ecd6ee" opacity=".8"/>
<path d="M61.2 112.0 L56.1 82.4" stroke="#eccee8" stroke-width="7.4" stroke-linecap="round"/>
<path d="M56.1 82.4 L43.0 67.2" stroke="#e8c8e6" stroke-width="5.8" stroke-linecap="round"/>
<path d="M43.0 67.2 L38.2 54.4" stroke="#e6c4e2" stroke-width="4.5" stroke-linecap="round"/>
<path d="M43.0 67.2 L40.3 51.8" stroke="#dcb8da" stroke-width="4.5" stroke-linecap="round"/>
<path d="M56.1 82.4 L62.8 61.0" stroke="#eccee8" stroke-width="5.8" stroke-linecap="round"/>
<path d="M62.8 61.0 L60.2 45.0" stroke="#dcb8da" stroke-width="4.5" stroke-linecap="round"/>
<path d="M62.8 61.0 L58.8 45.0" stroke="#dcb8da" stroke-width="4.5" stroke-linecap="round"/>
<path d="M146.4 112.0 L161.1 78.9" stroke="#e6c4e2" stroke-width="7.5" stroke-linecap="round"/>
<path d="M161.1 78.9 L168.3 51.4" stroke="#e6c4e2" stroke-width="5.8" stroke-linecap="round"/>
<path d="M168.3 51.4 L181.0 34.2" stroke="#e6c4e2" stroke-width="4.6" stroke-linecap="round"/>
<path d="M168.3 51.4 L167.0 35.7" stroke="#eccee8" stroke-width="4.6" stroke-linecap="round"/>
<path d="M161.1 78.9 L169.3 57.4" stroke="#dcb8da" stroke-width="5.8" stroke-linecap="round"/>
<path d="M169.3 57.4 L180.5 45.3" stroke="#dcb8da" stroke-width="4.6" stroke-linecap="round"/>
<path d="M169.3 57.4 L168.7 43.4" stroke="#eccee8" stroke-width="4.6" stroke-linecap="round"/>
<path d="M69.4 112.0 L55.6 81.2" stroke="#e8c8e6" stroke-width="8.3" stroke-linecap="round"/>
<path d="M55.6 81.2 L39.9 70.2" stroke="#e8c8e6" stroke-width="6.4" stroke-linecap="round"/>
<path d="M39.9 70.2 L28.2 61.6" stroke="#eccee8" stroke-width="5.0" stroke-linecap="round"/>
<path d="M39.9 70.2 L32.0 62.3" stroke="#e8c8e6" stroke-width="5.0" stroke-linecap="round"/>
<path d="M55.6 81.2 L48.7 60.7" stroke="#dcb8da" stroke-width="6.4" stroke-linecap="round"/>
<path d="M48.7 60.7 L44.4 47.8" stroke="#dcb8da" stroke-width="5.0" stroke-linecap="round"/>
<path d="M48.7 60.7 L46.4 48.9" stroke="#e6c4e2" stroke-width="5.0" stroke-linecap="round"/>
<path d="M60.0 112.0 L53.6 79.2" stroke="#e6c4e2" stroke-width="6.0" stroke-linecap="round"/>
<path d="M53.6 79.2 L47.5 55.4" stroke="#eccee8" stroke-width="4.7" stroke-linecap="round"/>
<path d="M47.5 55.4 L42.5 40.7" stroke="#e8c8e6" stroke-width="3.7" stroke-linecap="round"/>
<path d="M47.5 55.4 L50.6 38.0" stroke="#f6e6f4" stroke-width="3.7" stroke-linecap="round"/>
<path d="M53.6 79.2 L52.9 53.1" stroke="#f2daee" stroke-width="4.7" stroke-linecap="round"/>
<path d="M52.9 53.1 L46.5 33.7" stroke="#eccee8" stroke-width="3.7" stroke-linecap="round"/>
<path d="M52.9 53.1 L58.8 39.5" stroke="#eccee8" stroke-width="3.7" stroke-linecap="round"/>
<path d="M176.9 112.0 L181.2 74.0" stroke="#f6e6f4" stroke-width="8.0" stroke-linecap="round"/>
<path d="M181.2 74.0 L171.6 51.0" stroke="#eccee8" stroke-width="6.3" stroke-linecap="round"/>
<path d="M171.6 51.0 L158.0 40.2" stroke="#f2daee" stroke-width="4.9" stroke-linecap="round"/>
<path d="M171.6 51.0 L165.7 36.1" stroke="#eccee8" stroke-width="4.9" stroke-linecap="round"/>
<path d="M181.2 74.0 L172.8 52.2" stroke="#e8c8e6" stroke-width="6.3" stroke-linecap="round"/>
<path d="M172.8 52.2 L174.6 34.8" stroke="#f6e6f4" stroke-width="4.9" stroke-linecap="round"/>
<path d="M172.8 52.2 L166.7 35.5" stroke="#e6c4e2" stroke-width="4.9" stroke-linecap="round"/>
<path d="M191.3 112.0 L187.2 83.8" stroke="#dcb8da" stroke-width="6.7" stroke-linecap="round"/>
<path d="M187.2 83.8 L193.1 66.7" stroke="#eccee8" stroke-width="5.3" stroke-linecap="round"/>
<path d="M193.1 66.7 L190.4 53.7" stroke="#dcb8da" stroke-width="4.1" stroke-linecap="round"/>
<path d="M193.1 66.7 L200.9 59.6" stroke="#f6e6f4" stroke-width="4.1" stroke-linecap="round"/>
<path d="M187.2 83.8 L183.7 63.3" stroke="#e6c4e2" stroke-width="5.3" stroke-linecap="round"/>
<path d="M183.7 63.3 L173.7 50.6" stroke="#f2daee" stroke-width="4.1" stroke-linecap="round"/>
<path d="M183.7 63.3 L176.1 49.2" stroke="#e8c8e6" stroke-width="4.1" stroke-linecap="round"/>
<path d="M176.1 112.0 L176.6 70.9" stroke="#eccee8" stroke-width="7.4" stroke-linecap="round"/>
<path d="M176.6 70.9 L176.0 45.4" stroke="#f6e6f4" stroke-width="5.8" stroke-linecap="round"/>
<path d="M176.0 45.4 L185.1 29.4" stroke="#f6e6f4" stroke-width="4.5" stroke-linecap="round"/>
<path d="M176.0 45.4 L184.6 29.8" stroke="#f6e6f4" stroke-width="4.5" stroke-linecap="round"/>
<path d="M176.6 70.9 L185.9 39.7" stroke="#dcb8da" stroke-width="5.8" stroke-linecap="round"/>
<path d="M185.9 39.7 L197.1 21.8" stroke="#eccee8" stroke-width="4.5" stroke-linecap="round"/>
<path d="M185.9 39.7 L197.8 25.4" stroke="#e6c4e2" stroke-width="4.5" stroke-linecap="round"/>
<path d="M65.3 112.0 L61.2 80.2" stroke="#e6c4e2" stroke-width="6.2" stroke-linecap="round"/>
<path d="M61.2 80.2 L55.7 62.4" stroke="#e8c8e6" stroke-width="4.8" stroke-linecap="round"/>
<path d="M55.7 62.4 L47.2 53.8" stroke="#eccee8" stroke-width="3.8" stroke-linecap="round"/>
<path d="M55.7 62.4 L51.1 52.3" stroke="#dcb8da" stroke-width="3.8" stroke-linecap="round"/>
<path d="M61.2 80.2 L65.9 57.0" stroke="#e6c4e2" stroke-width="4.8" stroke-linecap="round"/>
<path d="M65.9 57.0 L67.3 41.1" stroke="#f6e6f4" stroke-width="3.8" stroke-linecap="round"/>
<path d="M65.9 57.0 L64.1 39.5" stroke="#e6c4e2" stroke-width="3.8" stroke-linecap="round"/>
<path d="M103.3 112.0 L92.9 81.4" stroke="#f6e6f4" stroke-width="7.7" stroke-linecap="round"/>
<path d="M92.9 81.4 L92.0 55.9" stroke="#e8c8e6" stroke-width="6.0" stroke-linecap="round"/>
<path d="M92.0 55.9 L94.4 41.8" stroke="#dcb8da" stroke-width="4.7" stroke-linecap="round"/>
<path d="M92.0 55.9 L98.3 38.3" stroke="#f2daee" stroke-width="4.7" stroke-linecap="round"/>
<path d="M92.9 81.4 L77.7 62.5" stroke="#dcb8da" stroke-width="6.0" stroke-linecap="round"/>
<path d="M77.7 62.5 L64.8 57.1" stroke="#e8c8e6" stroke-width="4.7" stroke-linecap="round"/>
<path d="M77.7 62.5 L74.4 45.9" stroke="#f2daee" stroke-width="4.7" stroke-linecap="round"/>
<path d="M212.8 112.0 L218.6 78.6" stroke="#e8c8e6" stroke-width="7.6" stroke-linecap="round"/>
<path d="M218.6 78.6 L230.3 57.8" stroke="#f2daee" stroke-width="5.9" stroke-linecap="round"/>
<path d="M230.3 57.8 L230.1 42.5" stroke="#f2daee" stroke-width="4.6" stroke-linecap="round"/>
<path d="M230.3 57.8 L235.5 43.0" stroke="#e6c4e2" stroke-width="4.6" stroke-linecap="round"/>
<path d="M218.6 78.6 L218.6 54.6" stroke="#dcb8da" stroke-width="5.9" stroke-linecap="round"/>
<path d="M218.6 54.6 L218.6 35.7" stroke="#f6e6f4" stroke-width="4.6" stroke-linecap="round"/>
<path d="M218.6 54.6 L216.2 39.0" stroke="#e8c8e6" stroke-width="4.6" stroke-linecap="round"/>
<path d="M127.0 112.0 L116.8 83.0" stroke="#f6e6f4" stroke-width="6.1" stroke-linecap="round"/>
<path d="M116.8 83.0 L111.8 64.9" stroke="#f6e6f4" stroke-width="4.7" stroke-linecap="round"/>
<path d="M111.8 64.9 L107.5 53.5" stroke="#dcb8da" stroke-width="3.7" stroke-linecap="round"/>
<path d="M111.8 64.9 L109.4 53.7" stroke="#dcb8da" stroke-width="3.7" stroke-linecap="round"/>
<path d="M116.8 83.0 L114.0 64.6" stroke="#f6e6f4" stroke-width="4.7" stroke-linecap="round"/>
<path d="M114.0 64.6 L117.8 52.7" stroke="#dcb8da" stroke-width="3.7" stroke-linecap="round"/>
<path d="M114.0 64.6 L113.9 51.5" stroke="#eccee8" stroke-width="3.7" stroke-linecap="round"/>
<path d="M177.3 112.0 L172.9 73.1" stroke="#e8c8e6" stroke-width="8.0" stroke-linecap="round"/>
<path d="M172.9 73.1 L163.7 46.5" stroke="#eccee8" stroke-width="6.2" stroke-linecap="round"/>
<path d="M163.7 46.5 L157.8 28.4" stroke="#f2daee" stroke-width="4.9" stroke-linecap="round"/>
<path d="M163.7 46.5 L154.2 27.4" stroke="#f6e6f4" stroke-width="4.9" stroke-linecap="round"/>
<path d="M172.9 73.1 L159.8 56.0" stroke="#f2daee" stroke-width="6.2" stroke-linecap="round"/>
<path d="M159.8 56.0 L154.5 40.3" stroke="#f6e6f4" stroke-width="4.9" stroke-linecap="round"/>
<path d="M159.8 56.0 L155.9 41.6" stroke="#e6c4e2" stroke-width="4.9" stroke-linecap="round"/>
<path d="M128.7 112.0 L125.0 77.3" stroke="#e6c4e2" stroke-width="8.2" stroke-linecap="round"/>
<path d="M125.0 77.3 L112.5 60.9" stroke="#dcb8da" stroke-width="6.4" stroke-linecap="round"/>
<path d="M112.5 60.9 L108.4 48.5" stroke="#f6e6f4" stroke-width="5.0" stroke-linecap="round"/>
<path d="M112.5 60.9 L104.2 51.8" stroke="#e6c4e2" stroke-width="5.0" stroke-linecap="round"/>
<path d="M125.0 77.3 L112.5 59.2" stroke="#f2daee" stroke-width="6.4" stroke-linecap="round"/>
<path d="M112.5 59.2 L97.0 51.2" stroke="#f6e6f4" stroke-width="5.0" stroke-linecap="round"/>
<path d="M112.5 59.2 L104.8 48.3" stroke="#f6e6f4" stroke-width="5.0" stroke-linecap="round"/>
<path d="M82.4 112.0 L86.3 76.2" stroke="#dcb8da" stroke-width="7.4" stroke-linecap="round"/>
<path d="M86.3 76.2 L90.3 50.7" stroke="#f6e6f4" stroke-width="5.8" stroke-linecap="round"/>
<path d="M90.3 50.7 L98.4 36.1" stroke="#f2daee" stroke-width="4.5" stroke-linecap="round"/>
<path d="M90.3 50.7 L101.7 33.7" stroke="#eccee8" stroke-width="4.5" stroke-linecap="round"/>
<path d="M86.3 76.2 L102.1 54.2" stroke="#f6e6f4" stroke-width="5.8" stroke-linecap="round"/>
<path d="M102.1 54.2 L112.8 43.1" stroke="#e8c8e6" stroke-width="4.5" stroke-linecap="round"/>
<path d="M102.1 54.2 L119.3 46.0" stroke="#f6e6f4" stroke-width="4.5" stroke-linecap="round"/>
<path d="M115.0 112.0 L97.7 75.4" stroke="#f2daee" stroke-width="6.4" stroke-linecap="round"/>
<path d="M97.7 75.4 L95.1 49.6" stroke="#e6c4e2" stroke-width="5.0" stroke-linecap="round"/>
<path d="M95.1 49.6 L95.7 34.4" stroke="#dcb8da" stroke-width="3.9" stroke-linecap="round"/>
<path d="M95.1 49.6 L93.1 35.1" stroke="#eccee8" stroke-width="3.9" stroke-linecap="round"/>
<path d="M97.7 75.4 L87.0 46.2" stroke="#eccee8" stroke-width="5.0" stroke-linecap="round"/>
<path d="M87.0 46.2 L85.9 22.8" stroke="#e8c8e6" stroke-width="3.9" stroke-linecap="round"/>
<path d="M87.0 46.2 L69.5 29.8" stroke="#e6c4e2" stroke-width="3.9" stroke-linecap="round"/>
<path d="M154.5 112.0 L168.6 77.2" stroke="#f6e6f4" stroke-width="8.5" stroke-linecap="round"/>
<path d="M168.6 77.2 L182.7 61.3" stroke="#e8c8e6" stroke-width="6.6" stroke-linecap="round"/>
<path d="M182.7 61.3 L191.3 49.0" stroke="#dcb8da" stroke-width="5.2" stroke-linecap="round"/>
<path d="M182.7 61.3 L190.4 48.1" stroke="#eccee8" stroke-width="5.2" stroke-linecap="round"/>
<path d="M168.6 77.2 L182.9 57.9" stroke="#f2daee" stroke-width="6.6" stroke-linecap="round"/>
<path d="M182.9 57.9 L189.0 46.1" stroke="#e6c4e2" stroke-width="5.2" stroke-linecap="round"/>
<path d="M182.9 57.9 L189.1 45.0" stroke="#e6c4e2" stroke-width="5.2" stroke-linecap="round"/>
<path d="M158.1 112.0 L167.8 78.4" stroke="#e6c4e2" stroke-width="6.2" stroke-linecap="round"/>
<path d="M167.8 78.4 L171.7 57.2" stroke="#f6e6f4" stroke-width="4.8" stroke-linecap="round"/>
<path d="M171.7 57.2 L175.3 45.7" stroke="#eccee8" stroke-width="3.8" stroke-linecap="round"/>
<path d="M171.7 57.2 L167.5 43.0" stroke="#dcb8da" stroke-width="3.8" stroke-linecap="round"/>
<path d="M167.8 78.4 L179.7 61.3" stroke="#e8c8e6" stroke-width="4.8" stroke-linecap="round"/>
<path d="M179.7 61.3 L188.2 51.2" stroke="#eccee8" stroke-width="3.8" stroke-linecap="round"/>
<path d="M179.7 61.3 L189.1 54.3" stroke="#f2daee" stroke-width="3.8" stroke-linecap="round"/>
<path d="M144.7 112.0 L139.8 71.9" stroke="#f2daee" stroke-width="6.1" stroke-linecap="round"/>
<path d="M139.8 71.9 L137.2 48.3" stroke="#dcb8da" stroke-width="4.7" stroke-linecap="round"/>
<path d="M137.2 48.3 L129.1 31.6" stroke="#f6e6f4" stroke-width="3.7" stroke-linecap="round"/>
<path d="M137.2 48.3 L143.5 32.3" stroke="#f6e6f4" stroke-width="3.7" stroke-linecap="round"/>
<path d="M139.8 71.9 L125.1 48.6" stroke="#e6c4e2" stroke-width="4.7" stroke-linecap="round"/>
<path d="M125.1 48.6 L109.4 40.2" stroke="#dcb8da" stroke-width="3.7" stroke-linecap="round"/>
<path d="M125.1 48.6 L107.3 38.2" stroke="#e6c4e2" stroke-width="3.7" stroke-linecap="round"/>
<path d="M202.6 112.0 L211.3 83.2" stroke="#dcb8da" stroke-width="6.1" stroke-linecap="round"/>
<path d="M211.3 83.2 L213.7 65.6" stroke="#e8c8e6" stroke-width="4.7" stroke-linecap="round"/>
<path d="M213.7 65.6 L215.2 54.1" stroke="#eccee8" stroke-width="3.7" stroke-linecap="round"/>
<path d="M213.7 65.6 L208.7 54.4" stroke="#dcb8da" stroke-width="3.7" stroke-linecap="round"/>
<path d="M211.3 83.2 L212.0 60.0" stroke="#f2daee" stroke-width="4.7" stroke-linecap="round"/>
<path d="M212.0 60.0 L206.2 47.1" stroke="#e8c8e6" stroke-width="3.7" stroke-linecap="round"/>
<path d="M212.0 60.0 L218.0 45.3" stroke="#f2daee" stroke-width="3.7" stroke-linecap="round"/>
<path d="M138.3 112.0 L119.7 73.0" stroke="#e6c4e2" stroke-width="8.9" stroke-linecap="round"/>
<path d="M119.7 73.0 L93.4 55.3" stroke="#f6e6f4" stroke-width="6.9" stroke-linecap="round"/>
<path d="M93.4 55.3 L80.5 34.0" stroke="#e8c8e6" stroke-width="5.4" stroke-linecap="round"/>
<path d="M93.4 55.3 L74.6 38.3" stroke="#f2daee" stroke-width="5.4" stroke-linecap="round"/>
<path d="M119.7 73.0 L118.9 46.7" stroke="#dcb8da" stroke-width="6.9" stroke-linecap="round"/>
<path d="M118.9 46.7 L116.2 29.3" stroke="#dcb8da" stroke-width="5.4" stroke-linecap="round"/>
<path d="M118.9 46.7 L113.2 28.8" stroke="#f2daee" stroke-width="5.4" stroke-linecap="round"/>
  </svg>
  <!-- clownfish -->
  <svg style="left:413px;top:658px;filter:blur(0.3px)" width="92" height="62" viewBox="0 0 92 62">
    <defs><clipPath id="cfc"><path d="M4 26 Q10 6 38 4 Q66 6 86 34 Q80 58 46 60 Q14 60 4 26 Z"/></clipPath></defs>
    <path d="M4 26 Q10 6 38 4 Q66 6 86 34 Q80 58 46 60 Q14 60 4 26 Z" fill="#eea028"/>
    <g clip-path="url(#cfc)">
      <path d="M20 2 Q50 0 72 30 Q60 42 50 40 Q30 20 20 2 Z" fill="#8a3a50" opacity=".9"/>
      <path d="M30 6 Q52 6 66 26 Q58 32 50 30 Q38 18 30 6 Z" fill="#5a2a60" opacity=".8"/>
      <path d="M14 8 Q22 30 40 50" stroke="#ffd060" stroke-width="5" fill="none" opacity=".7"/>
      <path d="M64 38 Q76 34 90 42 L88 62 L66 60 Z" fill="#2a2a7a"/>
      <path d="M60 34 Q66 44 68 56" stroke="#ffffff" stroke-width="4" fill="none"/>
      <path d="M36 44 L42 60 M48 42 L52 58" stroke="#fff2d8" stroke-width="3" opacity=".9"/>
      <path d="M0 20 Q8 12 14 10 Q10 34 18 58 Q4 46 0 20 Z" fill="#f6ecc8"/>
    </g>
  </svg>
  <!-- yellow fish (partial) -->
  <svg style="left:580px;top:586px" width="46" height="40" viewBox="0 0 46 40">
    <ellipse cx="30" cy="20" rx="13.5" ry="17" fill="#e4d428"/>
    <path d="M18 6 Q30 14 28 36 Q18 30 18 6 Z" fill="#58a8d8"/>
    <path d="M24 3 Q34 14 30 37" stroke="#151520" stroke-width="3.5" fill="none"/>
    <path d="M36 6 Q41 16 38 34" stroke="#9a9a20" stroke-width="1.5" fill="none" opacity=".6"/>
  </svg>
  <!-- pufferfish -->
  <svg style="left:612px;top:624px" width="100" height="60" viewBox="0 0 100 60">
    <defs><clipPath id="pfc"><path d="M1 42 Q-1 26 12 16 Q26 4 50 3 Q80 2 99 5 L99 52 Q70 56 40 54 Q8 54 1 42 Z"/></clipPath></defs>
    <path d="M1 42 Q-1 26 12 16 Q26 4 50 3 Q80 2 99 5 L99 52 Q70 56 40 54 Q8 54 1 42 Z" fill="#3c4270"/>
    <g clip-path="url(#pfc)">
    <path d="M0 42 Q30 50 60 47 Q84 45 100 40 V60 H0 Z" fill="#7c829e"/>
    <path d="M55 20 Q70 14 80 30 Q72 46 56 42 Z" fill="#1e2448" opacity=".55"/>
    <ellipse cx="90" cy="24" rx="7" ry="13" fill="#6a4a30" opacity=".6"/>
<circle cx="32.4" cy="6.9" r="0.61" fill="#d4daf6" opacity="0.48"/>
<circle cx="53.6" cy="16.8" r="0.37" fill="#d4daf6" opacity="0.68"/>
<circle cx="3.7" cy="19.9" r="0.38" fill="#d4daf6" opacity="0.49"/>
<circle cx="42.5" cy="38.0" r="0.40" fill="#d4daf6" opacity="0.55"/>
<circle cx="62.7" cy="43.6" r="0.58" fill="#d4daf6" opacity="0.63"/>
<circle cx="97.6" cy="2.1" r="0.69" fill="#d4daf6" opacity="0.58"/>
<circle cx="14.4" cy="5.4" r="0.47" fill="#d4daf6" opacity="0.82"/>
<circle cx="18.1" cy="26.8" r="0.61" fill="#d4daf6" opacity="0.62"/>
<circle cx="54.8" cy="2.9" r="0.37" fill="#d4daf6" opacity="0.54"/>
<circle cx="68.0" cy="19.7" r="0.48" fill="#d4daf6" opacity="0.71"/>
<circle cx="45.3" cy="13.8" r="0.67" fill="#d4daf6" opacity="0.76"/>
<circle cx="24.4" cy="26.4" r="0.56" fill="#d4daf6" opacity="0.84"/>
<circle cx="72.9" cy="13.2" r="0.74" fill="#d4daf6" opacity="0.50"/>
<circle cx="41.8" cy="34.8" r="0.41" fill="#d4daf6" opacity="0.67"/>
<circle cx="3.9" cy="30.7" r="0.66" fill="#d4daf6" opacity="0.71"/>
<circle cx="87.5" cy="14.4" r="0.63" fill="#d4daf6" opacity="0.72"/>
<circle cx="58.0" cy="21.0" r="0.69" fill="#d4daf6" opacity="0.88"/>
<circle cx="47.4" cy="30.6" r="0.37" fill="#d4daf6" opacity="0.77"/>
<circle cx="64.7" cy="45.7" r="0.68" fill="#d4daf6" opacity="0.58"/>
<circle cx="38.6" cy="30.8" r="0.36" fill="#d4daf6" opacity="0.66"/>
<circle cx="16.8" cy="5.4" r="0.37" fill="#d4daf6" opacity="0.80"/>
<circle cx="12.9" cy="11.4" r="0.51" fill="#d4daf6" opacity="0.84"/>
<circle cx="8.1" cy="20.7" r="0.57" fill="#d4daf6" opacity="0.85"/>
<circle cx="81.9" cy="39.7" r="0.46" fill="#d4daf6" opacity="0.64"/>
<circle cx="35.9" cy="40.7" r="0.73" fill="#d4daf6" opacity="0.52"/>
<circle cx="17.6" cy="10.7" r="0.44" fill="#d4daf6" opacity="0.67"/>
<circle cx="58.9" cy="12.1" r="0.35" fill="#d4daf6" opacity="0.64"/>
<circle cx="36.9" cy="26.1" r="0.73" fill="#d4daf6" opacity="0.76"/>
<circle cx="51.5" cy="28.4" r="0.62" fill="#d4daf6" opacity="0.47"/>
<circle cx="90.0" cy="35.9" r="0.70" fill="#d4daf6" opacity="0.81"/>
<circle cx="39.2" cy="18.4" r="0.39" fill="#d4daf6" opacity="0.74"/>
<circle cx="6.2" cy="3.1" r="0.43" fill="#d4daf6" opacity="0.52"/>
<circle cx="34.0" cy="2.4" r="0.35" fill="#d4daf6" opacity="0.52"/>
<circle cx="10.1" cy="16.7" r="0.36" fill="#d4daf6" opacity="0.84"/>
<circle cx="61.4" cy="6.8" r="0.45" fill="#d4daf6" opacity="0.61"/>
<circle cx="36.4" cy="5.7" r="0.69" fill="#d4daf6" opacity="0.90"/>
<circle cx="46.6" cy="22.3" r="0.38" fill="#d4daf6" opacity="0.50"/>
<circle cx="34.3" cy="12.2" r="0.68" fill="#d4daf6" opacity="0.52"/>
<circle cx="2.3" cy="43.7" r="0.56" fill="#d4daf6" opacity="0.52"/>
<circle cx="54.3" cy="1.2" r="0.56" fill="#d4daf6" opacity="0.89"/>
<circle cx="86.3" cy="32.0" r="0.45" fill="#d4daf6" opacity="0.62"/>
<circle cx="16.7" cy="35.5" r="0.56" fill="#d4daf6" opacity="0.80"/>
<circle cx="33.0" cy="10.3" r="0.67" fill="#d4daf6" opacity="0.89"/>
<circle cx="85.3" cy="37.1" r="0.68" fill="#d4daf6" opacity="0.78"/>
<circle cx="22.7" cy="23.8" r="0.49" fill="#d4daf6" opacity="0.46"/>
<circle cx="2.8" cy="12.9" r="0.45" fill="#d4daf6" opacity="0.76"/>
<circle cx="95.7" cy="20.6" r="0.72" fill="#d4daf6" opacity="0.89"/>
<circle cx="95.5" cy="16.8" r="0.44" fill="#d4daf6" opacity="0.55"/>
<circle cx="19.7" cy="9.4" r="0.60" fill="#d4daf6" opacity="0.86"/>
<circle cx="84.0" cy="22.1" r="0.61" fill="#d4daf6" opacity="0.81"/>
<circle cx="8.5" cy="30.4" r="0.71" fill="#d4daf6" opacity="0.80"/>
<circle cx="75.0" cy="22.0" r="0.42" fill="#d4daf6" opacity="0.81"/>
<circle cx="33.3" cy="36.8" r="0.74" fill="#d4daf6" opacity="0.63"/>
<circle cx="40.1" cy="43.6" r="0.64" fill="#d4daf6" opacity="0.53"/>
<circle cx="12.7" cy="7.0" r="0.71" fill="#d4daf6" opacity="0.81"/>
<circle cx="14.6" cy="38.0" r="0.74" fill="#d4daf6" opacity="0.75"/>
<circle cx="35.0" cy="25.2" r="0.40" fill="#d4daf6" opacity="0.46"/>
<circle cx="97.1" cy="29.9" r="0.56" fill="#d4daf6" opacity="0.87"/>
<circle cx="43.4" cy="40.1" r="0.68" fill="#d4daf6" opacity="0.54"/>
<circle cx="25.2" cy="13.5" r="0.45" fill="#d4daf6" opacity="0.71"/>
<circle cx="25.9" cy="19.3" r="0.40" fill="#d4daf6" opacity="0.86"/>
<circle cx="35.4" cy="21.1" r="0.58" fill="#d4daf6" opacity="0.86"/>
<circle cx="42.1" cy="42.2" r="0.55" fill="#d4daf6" opacity="0.69"/>
<circle cx="52.4" cy="0.9" r="0.53" fill="#d4daf6" opacity="0.53"/>
<circle cx="0.4" cy="36.8" r="0.42" fill="#d4daf6" opacity="0.66"/>
<circle cx="72.5" cy="25.6" r="0.48" fill="#d4daf6" opacity="0.68"/>
<circle cx="55.5" cy="36.1" r="0.39" fill="#d4daf6" opacity="0.70"/>
<circle cx="24.8" cy="12.7" r="0.66" fill="#d4daf6" opacity="0.68"/>
<circle cx="56.2" cy="35.0" r="0.71" fill="#d4daf6" opacity="0.65"/>
<circle cx="61.3" cy="23.3" r="0.55" fill="#d4daf6" opacity="0.76"/>
<circle cx="45.2" cy="24.5" r="0.54" fill="#d4daf6" opacity="0.87"/>
<circle cx="69.9" cy="40.3" r="0.73" fill="#d4daf6" opacity="0.57"/>
<circle cx="56.0" cy="43.4" r="0.69" fill="#d4daf6" opacity="0.51"/>
<circle cx="12.2" cy="20.3" r="0.38" fill="#d4daf6" opacity="0.56"/>
<circle cx="7.3" cy="30.8" r="0.66" fill="#d4daf6" opacity="0.85"/>
<circle cx="15.4" cy="32.9" r="0.61" fill="#d4daf6" opacity="0.51"/>
<circle cx="88.3" cy="44.5" r="0.44" fill="#d4daf6" opacity="0.88"/>
<circle cx="39.8" cy="22.4" r="0.75" fill="#d4daf6" opacity="0.82"/>
<circle cx="16.1" cy="19.9" r="0.56" fill="#d4daf6" opacity="0.60"/>
<circle cx="19.6" cy="14.7" r="0.64" fill="#d4daf6" opacity="0.46"/>
<circle cx="55.4" cy="20.3" r="0.36" fill="#d4daf6" opacity="0.60"/>
<circle cx="62.4" cy="23.6" r="0.38" fill="#d4daf6" opacity="0.89"/>
<circle cx="78.8" cy="44.7" r="0.39" fill="#d4daf6" opacity="0.57"/>
<circle cx="4.0" cy="35.8" r="0.46" fill="#d4daf6" opacity="0.51"/>
<circle cx="42.2" cy="41.9" r="0.68" fill="#d4daf6" opacity="0.57"/>
<circle cx="14.9" cy="42.3" r="0.58" fill="#d4daf6" opacity="0.77"/>
<circle cx="8.9" cy="2.6" r="0.63" fill="#d4daf6" opacity="0.64"/>
<circle cx="7.2" cy="43.2" r="0.60" fill="#d4daf6" opacity="0.81"/>
<circle cx="8.4" cy="39.4" r="0.38" fill="#d4daf6" opacity="0.84"/>
<circle cx="45.4" cy="15.6" r="0.57" fill="#d4daf6" opacity="0.87"/>
<circle cx="26.8" cy="5.9" r="0.56" fill="#d4daf6" opacity="0.56"/>
<circle cx="10.9" cy="7.4" r="0.37" fill="#d4daf6" opacity="0.54"/>
<circle cx="31.2" cy="14.0" r="0.65" fill="#d4daf6" opacity="0.58"/>
<circle cx="50.0" cy="8.2" r="0.49" fill="#d4daf6" opacity="0.46"/>
<circle cx="25.0" cy="0.7" r="0.64" fill="#d4daf6" opacity="0.70"/>
<circle cx="18.9" cy="21.8" r="0.72" fill="#d4daf6" opacity="0.50"/>
<circle cx="81.9" cy="19.9" r="0.55" fill="#d4daf6" opacity="0.83"/>
<circle cx="39.3" cy="23.3" r="0.63" fill="#d4daf6" opacity="0.89"/>
<circle cx="34.3" cy="38.3" r="0.63" fill="#d4daf6" opacity="0.74"/>
<circle cx="40.5" cy="16.0" r="0.37" fill="#d4daf6" opacity="0.51"/>
<circle cx="7.1" cy="34.1" r="0.45" fill="#d4daf6" opacity="0.52"/>
<circle cx="8.4" cy="38.7" r="0.70" fill="#d4daf6" opacity="0.75"/>
<circle cx="28.2" cy="11.1" r="0.47" fill="#d4daf6" opacity="0.66"/>
<circle cx="15.8" cy="20.5" r="0.46" fill="#d4daf6" opacity="0.88"/>
<circle cx="97.3" cy="25.2" r="0.45" fill="#d4daf6" opacity="0.88"/>
<circle cx="31.0" cy="16.4" r="0.35" fill="#d4daf6" opacity="0.62"/>
<circle cx="47.5" cy="23.1" r="0.43" fill="#d4daf6" opacity="0.68"/>
<circle cx="0.5" cy="12.2" r="0.39" fill="#d4daf6" opacity="0.63"/>
<circle cx="4.2" cy="1.0" r="0.47" fill="#d4daf6" opacity="0.55"/>
<circle cx="58.6" cy="24.3" r="0.65" fill="#d4daf6" opacity="0.75"/>
<circle cx="71.6" cy="40.4" r="0.51" fill="#d4daf6" opacity="0.60"/>
<circle cx="98.5" cy="6.9" r="0.64" fill="#d4daf6" opacity="0.74"/>
<circle cx="4.4" cy="38.4" r="0.71" fill="#d4daf6" opacity="0.73"/>
<circle cx="73.4" cy="37.4" r="0.41" fill="#d4daf6" opacity="0.69"/>
<circle cx="50.4" cy="38.4" r="0.67" fill="#d4daf6" opacity="0.82"/>
<circle cx="58.4" cy="41.1" r="0.62" fill="#d4daf6" opacity="0.76"/>
<circle cx="23.0" cy="1.4" r="0.40" fill="#d4daf6" opacity="0.61"/>
<circle cx="10.5" cy="38.4" r="0.57" fill="#d4daf6" opacity="0.73"/>
<circle cx="62.6" cy="31.3" r="0.55" fill="#d4daf6" opacity="0.45"/>
<circle cx="79.8" cy="34.4" r="0.55" fill="#d4daf6" opacity="0.69"/>
<circle cx="65.9" cy="3.0" r="0.64" fill="#d4daf6" opacity="0.56"/>
<circle cx="7.4" cy="12.2" r="0.64" fill="#d4daf6" opacity="0.54"/>
<circle cx="74.0" cy="44.9" r="0.55" fill="#d4daf6" opacity="0.62"/>
<circle cx="47.9" cy="31.5" r="0.66" fill="#d4daf6" opacity="0.73"/>
<circle cx="64.3" cy="3.6" r="0.41" fill="#d4daf6" opacity="0.56"/>
<circle cx="74.3" cy="14.0" r="0.58" fill="#d4daf6" opacity="0.46"/>
<circle cx="6.1" cy="12.4" r="0.62" fill="#d4daf6" opacity="0.76"/>
<circle cx="67.6" cy="13.4" r="0.56" fill="#d4daf6" opacity="0.66"/>
<circle cx="46.6" cy="5.5" r="0.71" fill="#d4daf6" opacity="0.54"/>
<circle cx="97.8" cy="43.1" r="0.36" fill="#d4daf6" opacity="0.66"/>
<circle cx="82.0" cy="44.5" r="0.53" fill="#d4daf6" opacity="0.57"/>
<circle cx="21.0" cy="43.5" r="0.43" fill="#d4daf6" opacity="0.71"/>
<circle cx="14.2" cy="24.1" r="0.73" fill="#d4daf6" opacity="0.51"/>
<circle cx="82.0" cy="23.4" r="0.70" fill="#d4daf6" opacity="0.77"/>
<circle cx="23.1" cy="41.3" r="0.54" fill="#d4daf6" opacity="0.46"/>
<circle cx="0.4" cy="22.6" r="0.53" fill="#d4daf6" opacity="0.59"/>
<circle cx="14.1" cy="15.8" r="0.48" fill="#d4daf6" opacity="0.83"/>
<circle cx="0.2" cy="34.5" r="0.69" fill="#d4daf6" opacity="0.50"/>
<circle cx="92.6" cy="32.8" r="0.71" fill="#d4daf6" opacity="0.58"/>
<circle cx="37.2" cy="18.1" r="0.75" fill="#d4daf6" opacity="0.72"/>
<circle cx="36.1" cy="19.7" r="0.46" fill="#d4daf6" opacity="0.47"/>
<circle cx="10.2" cy="38.4" r="0.46" fill="#d4daf6" opacity="0.87"/>
<circle cx="24.9" cy="12.2" r="0.55" fill="#d4daf6" opacity="0.54"/>
<circle cx="37.3" cy="44.0" r="0.70" fill="#d4daf6" opacity="0.82"/>
<circle cx="63.1" cy="42.0" r="0.73" fill="#d4daf6" opacity="0.70"/>
<circle cx="72.0" cy="2.3" r="0.64" fill="#d4daf6" opacity="0.65"/>
<circle cx="75.3" cy="29.6" r="0.46" fill="#d4daf6" opacity="0.47"/>
<circle cx="92.7" cy="5.9" r="0.54" fill="#d4daf6" opacity="0.60"/>
<circle cx="29.8" cy="34.0" r="0.74" fill="#d4daf6" opacity="0.57"/>
<circle cx="65.6" cy="13.8" r="0.57" fill="#d4daf6" opacity="0.63"/>
<circle cx="16.7" cy="7.4" r="0.43" fill="#d4daf6" opacity="0.86"/>
<circle cx="49.7" cy="10.1" r="0.71" fill="#d4daf6" opacity="0.90"/>
<circle cx="45.0" cy="6.4" r="0.43" fill="#d4daf6" opacity="0.49"/>
<circle cx="34.2" cy="4.2" r="0.45" fill="#d4daf6" opacity="0.57"/>
<circle cx="57.0" cy="40.8" r="0.65" fill="#d4daf6" opacity="0.64"/>
<circle cx="41.4" cy="24.1" r="0.50" fill="#d4daf6" opacity="0.60"/>
<circle cx="6.2" cy="12.8" r="0.74" fill="#d4daf6" opacity="0.51"/>
<circle cx="50.3" cy="29.0" r="0.70" fill="#d4daf6" opacity="0.55"/>
<circle cx="27.1" cy="11.4" r="0.51" fill="#d4daf6" opacity="0.65"/>
<circle cx="95.4" cy="39.0" r="0.70" fill="#d4daf6" opacity="0.46"/>
<circle cx="3.2" cy="32.6" r="0.71" fill="#d4daf6" opacity="0.66"/>
<circle cx="58.7" cy="0.0" r="0.51" fill="#d4daf6" opacity="0.87"/>
<circle cx="82.6" cy="39.4" r="0.74" fill="#d4daf6" opacity="0.56"/>
<circle cx="10.9" cy="7.1" r="0.56" fill="#d4daf6" opacity="0.76"/>
<circle cx="94.1" cy="33.2" r="0.61" fill="#d4daf6" opacity="0.79"/>
<circle cx="45.7" cy="25.4" r="0.37" fill="#d4daf6" opacity="0.80"/>
<circle cx="23.3" cy="42.3" r="0.61" fill="#d4daf6" opacity="0.59"/>
<circle cx="12.8" cy="11.6" r="0.60" fill="#d4daf6" opacity="0.76"/>
<circle cx="11.2" cy="3.2" r="0.56" fill="#d4daf6" opacity="0.71"/>
<circle cx="38.8" cy="10.3" r="0.59" fill="#d4daf6" opacity="0.45"/>
<circle cx="30.2" cy="21.2" r="0.73" fill="#d4daf6" opacity="0.74"/>
<circle cx="88.4" cy="21.9" r="0.44" fill="#d4daf6" opacity="0.56"/>
<circle cx="96.1" cy="32.4" r="0.47" fill="#d4daf6" opacity="0.46"/>
<circle cx="49.8" cy="31.0" r="0.52" fill="#d4daf6" opacity="0.57"/>
<circle cx="66.7" cy="42.6" r="0.44" fill="#d4daf6" opacity="0.47"/>
<circle cx="33.8" cy="19.3" r="0.62" fill="#d4daf6" opacity="0.54"/>
<circle cx="79.7" cy="34.0" r="0.55" fill="#d4daf6" opacity="0.54"/>
<circle cx="97.0" cy="14.3" r="0.68" fill="#d4daf6" opacity="0.55"/>
<circle cx="22.1" cy="35.0" r="0.47" fill="#d4daf6" opacity="0.88"/>
<circle cx="49.6" cy="8.6" r="0.44" fill="#d4daf6" opacity="0.64"/>
<circle cx="66.5" cy="43.6" r="0.41" fill="#d4daf6" opacity="0.63"/>
<circle cx="21.3" cy="44.8" r="0.41" fill="#d4daf6" opacity="0.47"/>
<circle cx="6.0" cy="18.1" r="0.71" fill="#d4daf6" opacity="0.85"/>
<circle cx="73.3" cy="45.9" r="0.72" fill="#d4daf6" opacity="0.60"/>
<circle cx="18.6" cy="43.1" r="0.65" fill="#d4daf6" opacity="0.46"/>
<circle cx="66.4" cy="17.4" r="0.50" fill="#d4daf6" opacity="0.60"/>
<circle cx="16.9" cy="0.1" r="0.46" fill="#d4daf6" opacity="0.61"/>
<circle cx="95.6" cy="5.7" r="0.74" fill="#d4daf6" opacity="0.54"/>
<circle cx="35.7" cy="37.8" r="0.68" fill="#d4daf6" opacity="0.64"/>
<circle cx="4.9" cy="21.8" r="0.50" fill="#d4daf6" opacity="0.86"/>
<circle cx="19.3" cy="16.8" r="0.71" fill="#d4daf6" opacity="0.46"/>
<circle cx="41.1" cy="37.3" r="0.66" fill="#d4daf6" opacity="0.47"/>
<circle cx="3.5" cy="2.9" r="0.72" fill="#d4daf6" opacity="0.57"/>
<circle cx="74.7" cy="41.3" r="0.49" fill="#d4daf6" opacity="0.57"/>
<circle cx="95.8" cy="28.4" r="0.45" fill="#d4daf6" opacity="0.77"/>
<circle cx="31.6" cy="12.7" r="0.35" fill="#d4daf6" opacity="0.79"/>
<circle cx="91.6" cy="29.2" r="0.73" fill="#d4daf6" opacity="0.46"/>
<circle cx="23.4" cy="21.9" r="0.73" fill="#d4daf6" opacity="0.88"/>
<circle cx="38.7" cy="11.5" r="0.52" fill="#d4daf6" opacity="0.67"/>
<circle cx="92.8" cy="8.4" r="0.67" fill="#d4daf6" opacity="0.78"/>
<circle cx="82.3" cy="35.5" r="0.59" fill="#d4daf6" opacity="0.60"/>
<circle cx="32.0" cy="16.6" r="0.66" fill="#d4daf6" opacity="0.49"/>
<circle cx="19.7" cy="34.6" r="0.45" fill="#d4daf6" opacity="0.48"/>
<circle cx="3.4" cy="25.4" r="0.48" fill="#d4daf6" opacity="0.89"/>
<circle cx="88.3" cy="45.4" r="0.46" fill="#d4daf6" opacity="0.49"/>
<circle cx="9.6" cy="22.9" r="0.63" fill="#d4daf6" opacity="0.65"/>
<circle cx="23.4" cy="19.2" r="0.60" fill="#d4daf6" opacity="0.75"/>
<circle cx="74.8" cy="39.0" r="0.62" fill="#d4daf6" opacity="0.50"/>
<circle cx="84.1" cy="13.5" r="0.58" fill="#d4daf6" opacity="0.62"/>
<circle cx="73.8" cy="9.2" r="0.45" fill="#d4daf6" opacity="0.56"/>
<circle cx="15.3" cy="40.7" r="0.58" fill="#d4daf6" opacity="0.60"/>
<circle cx="39.6" cy="45.7" r="0.55" fill="#d4daf6" opacity="0.55"/>
<circle cx="80.8" cy="30.1" r="0.75" fill="#d4daf6" opacity="0.50"/>
<circle cx="47.5" cy="37.7" r="0.69" fill="#d4daf6" opacity="0.86"/>
<circle cx="4.0" cy="13.5" r="0.40" fill="#d4daf6" opacity="0.54"/>
<circle cx="97.3" cy="26.8" r="0.72" fill="#d4daf6" opacity="0.62"/>
<circle cx="86.6" cy="20.7" r="0.45" fill="#d4daf6" opacity="0.80"/>
<circle cx="94.6" cy="4.9" r="0.59" fill="#d4daf6" opacity="0.73"/>
<circle cx="21.8" cy="17.0" r="0.41" fill="#d4daf6" opacity="0.54"/>
<circle cx="25.5" cy="27.6" r="0.61" fill="#d4daf6" opacity="0.54"/>
<circle cx="1.1" cy="15.1" r="0.62" fill="#d4daf6" opacity="0.53"/>
<circle cx="31.2" cy="9.4" r="0.67" fill="#d4daf6" opacity="0.70"/>
<circle cx="6.3" cy="4.7" r="0.51" fill="#d4daf6" opacity="0.70"/>
<circle cx="63.9" cy="4.2" r="0.42" fill="#d4daf6" opacity="0.76"/>
<circle cx="41.0" cy="13.0" r="0.47" fill="#d4daf6" opacity="0.88"/>
<circle cx="31.2" cy="26.1" r="0.49" fill="#d4daf6" opacity="0.64"/>
<circle cx="86.4" cy="45.8" r="0.50" fill="#d4daf6" opacity="0.54"/>
<circle cx="72.8" cy="9.4" r="0.35" fill="#d4daf6" opacity="0.86"/>
<circle cx="42.4" cy="37.7" r="0.51" fill="#d4daf6" opacity="0.85"/>
<circle cx="46.1" cy="7.5" r="0.36" fill="#d4daf6" opacity="0.70"/>
<circle cx="64.1" cy="41.9" r="0.39" fill="#d4daf6" opacity="0.73"/>
<circle cx="37.1" cy="23.2" r="0.41" fill="#d4daf6" opacity="0.58"/>
<circle cx="52.1" cy="42.6" r="0.39" fill="#d4daf6" opacity="0.67"/>
<circle cx="80.5" cy="44.5" r="0.43" fill="#d4daf6" opacity="0.51"/>
<circle cx="94.3" cy="44.9" r="0.54" fill="#d4daf6" opacity="0.47"/>
<circle cx="92.6" cy="17.8" r="0.71" fill="#d4daf6" opacity="0.73"/>
<circle cx="82.5" cy="7.4" r="0.66" fill="#d4daf6" opacity="0.55"/>
<circle cx="40.4" cy="38.9" r="0.68" fill="#d4daf6" opacity="0.53"/>
<circle cx="21.8" cy="18.4" r="0.56" fill="#d4daf6" opacity="0.62"/>
<circle cx="12.3" cy="11.4" r="0.64" fill="#d4daf6" opacity="0.85"/>
<circle cx="4.1" cy="25.9" r="0.65" fill="#d4daf6" opacity="0.47"/>
<circle cx="83.8" cy="5.4" r="0.59" fill="#d4daf6" opacity="0.70"/>
<circle cx="62.7" cy="14.1" r="0.52" fill="#d4daf6" opacity="0.71"/>
<circle cx="42.6" cy="30.3" r="0.53" fill="#d4daf6" opacity="0.65"/>
<circle cx="2.3" cy="28.5" r="0.55" fill="#d4daf6" opacity="0.56"/>
<circle cx="76.4" cy="35.9" r="0.53" fill="#d4daf6" opacity="0.53"/>
<circle cx="47.3" cy="4.9" r="0.40" fill="#d4daf6" opacity="0.64"/>
<circle cx="9.2" cy="20.3" r="0.55" fill="#d4daf6" opacity="0.47"/>
<circle cx="63.6" cy="3.8" r="0.64" fill="#d4daf6" opacity="0.80"/>
<circle cx="51.1" cy="2.5" r="0.55" fill="#d4daf6" opacity="0.62"/>
<circle cx="95.1" cy="6.3" r="0.69" fill="#d4daf6" opacity="0.90"/>
<circle cx="73.2" cy="37.5" r="0.43" fill="#d4daf6" opacity="0.89"/>
<circle cx="49.2" cy="44.0" r="0.72" fill="#d4daf6" opacity="0.52"/>
<circle cx="78.8" cy="42.8" r="0.38" fill="#d4daf6" opacity="0.61"/>
<circle cx="75.6" cy="7.3" r="0.71" fill="#d4daf6" opacity="0.57"/>
<circle cx="81.6" cy="6.6" r="0.55" fill="#d4daf6" opacity="0.86"/>
<circle cx="20.8" cy="12.1" r="0.55" fill="#d4daf6" opacity="0.59"/>
<circle cx="3.7" cy="8.4" r="0.41" fill="#d4daf6" opacity="0.87"/>
<circle cx="68.0" cy="41.2" r="0.42" fill="#d4daf6" opacity="0.80"/>
<circle cx="11.5" cy="24.4" r="0.60" fill="#d4daf6" opacity="0.61"/>
<circle cx="87.3" cy="25.5" r="0.58" fill="#d4daf6" opacity="0.85"/>
<circle cx="10.5" cy="45.7" r="0.60" fill="#d4daf6" opacity="0.63"/>
<circle cx="79.8" cy="12.2" r="0.75" fill="#d4daf6" opacity="0.71"/>
<circle cx="36.0" cy="35.2" r="0.53" fill="#d4daf6" opacity="0.53"/>
<circle cx="74.4" cy="2.2" r="0.68" fill="#d4daf6" opacity="0.56"/>
<circle cx="63.9" cy="45.3" r="0.58" fill="#d4daf6" opacity="0.75"/>
<circle cx="31.3" cy="0.1" r="0.36" fill="#d4daf6" opacity="0.52"/>
<circle cx="61.6" cy="19.9" r="0.56" fill="#d4daf6" opacity="0.85"/>
<circle cx="13.2" cy="10.5" r="0.61" fill="#d4daf6" opacity="0.46"/>
<circle cx="0.3" cy="16.3" r="0.39" fill="#d4daf6" opacity="0.61"/>
<circle cx="22.4" cy="26.8" r="0.59" fill="#d4daf6" opacity="0.54"/>
<circle cx="62.4" cy="21.8" r="0.40" fill="#d4daf6" opacity="0.87"/>
<circle cx="24.4" cy="6.9" r="0.39" fill="#d4daf6" opacity="0.74"/>
<circle cx="87.1" cy="36.0" r="0.51" fill="#d4daf6" opacity="0.57"/>
<circle cx="1.1" cy="29.7" r="0.57" fill="#d4daf6" opacity="0.61"/>
<circle cx="64.6" cy="20.4" r="0.72" fill="#d4daf6" opacity="0.78"/>
<circle cx="24.8" cy="41.6" r="0.37" fill="#d4daf6" opacity="0.69"/>
<circle cx="40.6" cy="10.9" r="0.37" fill="#d4daf6" opacity="0.80"/>
<circle cx="1.2" cy="25.3" r="0.73" fill="#d4daf6" opacity="0.51"/>
<circle cx="20.0" cy="28.0" r="0.55" fill="#d4daf6" opacity="0.74"/>
<circle cx="81.3" cy="8.0" r="0.47" fill="#d4daf6" opacity="0.59"/>
<circle cx="4.8" cy="40.9" r="0.66" fill="#d4daf6" opacity="0.77"/>
<circle cx="0.6" cy="38.8" r="0.65" fill="#d4daf6" opacity="0.66"/>
<circle cx="74.2" cy="20.8" r="0.44" fill="#d4daf6" opacity="0.50"/>
<circle cx="23.2" cy="1.8" r="0.48" fill="#d4daf6" opacity="0.79"/>
<circle cx="69.5" cy="38.9" r="0.63" fill="#d4daf6" opacity="0.57"/>
<circle cx="55.4" cy="20.1" r="0.67" fill="#d4daf6" opacity="0.69"/>
<circle cx="26.5" cy="29.5" r="0.74" fill="#d4daf6" opacity="0.55"/>
<circle cx="88.0" cy="0.7" r="0.45" fill="#d4daf6" opacity="0.56"/>
<circle cx="74.4" cy="43.5" r="0.65" fill="#d4daf6" opacity="0.60"/>
<circle cx="88.0" cy="15.1" r="0.45" fill="#d4daf6" opacity="0.86"/>
<circle cx="63.1" cy="31.9" r="0.62" fill="#d4daf6" opacity="0.89"/>
<circle cx="46.9" cy="38.6" r="0.63" fill="#d4daf6" opacity="0.84"/>
<circle cx="43.7" cy="33.3" r="0.58" fill="#d4daf6" opacity="0.59"/>
<circle cx="21.2" cy="28.6" r="0.38" fill="#d4daf6" opacity="0.86"/>
<circle cx="14.5" cy="1.2" r="0.39" fill="#d4daf6" opacity="0.87"/>
<circle cx="34.5" cy="6.5" r="0.36" fill="#d4daf6" opacity="0.47"/>
<circle cx="69.3" cy="29.2" r="0.63" fill="#d4daf6" opacity="0.78"/>
<circle cx="6.6" cy="27.2" r="0.50" fill="#d4daf6" opacity="0.82"/>
<circle cx="82.0" cy="41.0" r="0.38" fill="#d4daf6" opacity="0.84"/>
<circle cx="91.4" cy="43.4" r="0.39" fill="#d4daf6" opacity="0.54"/>
<circle cx="11.2" cy="1.6" r="0.69" fill="#d4daf6" opacity="0.82"/>
<circle cx="63.4" cy="38.0" r="0.60" fill="#d4daf6" opacity="0.58"/>
<circle cx="10.0" cy="4.5" r="0.65" fill="#d4daf6" opacity="0.54"/>
<circle cx="31.9" cy="19.5" r="0.36" fill="#d4daf6" opacity="0.57"/>
<circle cx="28.3" cy="32.9" r="0.50" fill="#d4daf6" opacity="0.59"/>
<circle cx="96.4" cy="23.2" r="0.69" fill="#d4daf6" opacity="0.73"/>
<circle cx="3.1" cy="19.0" r="0.52" fill="#d4daf6" opacity="0.80"/>
<circle cx="34.7" cy="32.4" r="0.57" fill="#d4daf6" opacity="0.55"/>
<circle cx="86.2" cy="4.2" r="0.68" fill="#d4daf6" opacity="0.53"/>
<circle cx="0.1" cy="9.3" r="0.65" fill="#d4daf6" opacity="0.89"/>
<circle cx="0.4" cy="22.6" r="0.55" fill="#d4daf6" opacity="0.81"/>
<circle cx="18.5" cy="22.8" r="0.49" fill="#d4daf6" opacity="0.82"/>
<circle cx="26.1" cy="43.4" r="0.46" fill="#d4daf6" opacity="0.55"/>
<circle cx="69.9" cy="22.9" r="0.39" fill="#d4daf6" opacity="0.74"/>
<circle cx="8.1" cy="36.2" r="0.63" fill="#d4daf6" opacity="0.80"/>
<circle cx="62.8" cy="16.4" r="0.51" fill="#d4daf6" opacity="0.63"/>
<circle cx="89.0" cy="4.0" r="0.71" fill="#d4daf6" opacity="0.46"/>
<circle cx="20.6" cy="12.1" r="0.71" fill="#d4daf6" opacity="0.68"/>
<circle cx="37.9" cy="40.7" r="0.44" fill="#d4daf6" opacity="0.66"/>
<circle cx="53.2" cy="34.7" r="0.65" fill="#d4daf6" opacity="0.74"/>
<circle cx="34.8" cy="15.0" r="0.41" fill="#d4daf6" opacity="0.83"/>
<circle cx="66.2" cy="34.1" r="0.42" fill="#d4daf6" opacity="0.65"/>
<circle cx="77.3" cy="26.6" r="0.40" fill="#d4daf6" opacity="0.66"/>
<circle cx="88.5" cy="10.9" r="0.43" fill="#d4daf6" opacity="0.59"/>
<circle cx="70.3" cy="38.8" r="0.41" fill="#d4daf6" opacity="0.52"/>
<circle cx="24.8" cy="15.0" r="0.56" fill="#d4daf6" opacity="0.52"/>
<circle cx="32.8" cy="8.7" r="0.74" fill="#d4daf6" opacity="0.78"/>
<circle cx="10.2" cy="44.3" r="0.39" fill="#d4daf6" opacity="0.62"/>
<circle cx="98.4" cy="36.6" r="0.64" fill="#d4daf6" opacity="0.65"/>
<circle cx="19.6" cy="29.3" r="0.39" fill="#d4daf6" opacity="0.54"/>
<circle cx="38.8" cy="1.6" r="0.51" fill="#d4daf6" opacity="0.81"/>
<circle cx="69.3" cy="23.0" r="0.60" fill="#d4daf6" opacity="0.66"/>
<circle cx="14.2" cy="27.8" r="0.51" fill="#d4daf6" opacity="0.78"/>
<circle cx="90.8" cy="19.8" r="0.58" fill="#d4daf6" opacity="0.79"/>
<circle cx="42.1" cy="10.5" r="0.64" fill="#d4daf6" opacity="0.85"/>
<circle cx="77.4" cy="32.2" r="0.69" fill="#d4daf6" opacity="0.76"/>
<circle cx="64.2" cy="20.9" r="0.48" fill="#d4daf6" opacity="0.73"/>
<circle cx="9.8" cy="19.3" r="0.66" fill="#d4daf6" opacity="0.77"/>
<circle cx="63.0" cy="11.5" r="0.52" fill="#d4daf6" opacity="0.65"/>
<circle cx="62.2" cy="18.8" r="0.62" fill="#d4daf6" opacity="0.87"/>
<circle cx="18.3" cy="30.1" r="0.66" fill="#d4daf6" opacity="0.62"/>
<circle cx="49.0" cy="44.8" r="0.37" fill="#d4daf6" opacity="0.69"/>
<circle cx="16.1" cy="36.0" r="0.73" fill="#d4daf6" opacity="0.68"/>
<circle cx="10.1" cy="26.4" r="0.57" fill="#d4daf6" opacity="0.77"/>
<circle cx="51.2" cy="29.4" r="0.68" fill="#d4daf6" opacity="0.68"/>
<circle cx="41.0" cy="43.6" r="0.43" fill="#d4daf6" opacity="0.76"/>
<circle cx="39.2" cy="35.1" r="0.40" fill="#d4daf6" opacity="0.89"/>
<circle cx="35.5" cy="2.6" r="0.46" fill="#d4daf6" opacity="0.63"/>
<circle cx="1.3" cy="19.3" r="0.52" fill="#d4daf6" opacity="0.76"/>
<circle cx="35.2" cy="12.2" r="0.44" fill="#d4daf6" opacity="0.78"/>
<circle cx="94.0" cy="24.2" r="0.44" fill="#d4daf6" opacity="0.81"/>
<circle cx="39.2" cy="9.8" r="0.40" fill="#d4daf6" opacity="0.80"/>
<circle cx="81.0" cy="29.2" r="0.54" fill="#d4daf6" opacity="0.70"/>
<circle cx="22.6" cy="44.3" r="0.49" fill="#d4daf6" opacity="0.74"/>
<circle cx="81.9" cy="37.5" r="0.54" fill="#d4daf6" opacity="0.58"/>
<circle cx="54.8" cy="5.8" r="0.68" fill="#d4daf6" opacity="0.61"/>
<circle cx="85.1" cy="12.3" r="0.50" fill="#d4daf6" opacity="0.56"/>
<circle cx="42.6" cy="8.6" r="0.35" fill="#d4daf6" opacity="0.77"/>
<circle cx="28.1" cy="11.3" r="0.47" fill="#d4daf6" opacity="0.67"/>
<circle cx="42.8" cy="29.3" r="0.61" fill="#d4daf6" opacity="0.61"/>
<circle cx="92.9" cy="39.3" r="0.37" fill="#d4daf6" opacity="0.82"/>
<circle cx="90.6" cy="36.1" r="0.41" fill="#d4daf6" opacity="0.82"/>
<circle cx="63.3" cy="0.7" r="0.35" fill="#d4daf6" opacity="0.88"/>
<circle cx="65.6" cy="11.5" r="0.39" fill="#d4daf6" opacity="0.51"/>
<circle cx="23.4" cy="35.7" r="0.49" fill="#d4daf6" opacity="0.52"/>
<circle cx="90.4" cy="36.4" r="0.42" fill="#d4daf6" opacity="0.85"/>
<circle cx="60.8" cy="35.9" r="0.62" fill="#d4daf6" opacity="0.85"/>
<circle cx="78.8" cy="38.6" r="0.43" fill="#d4daf6" opacity="0.76"/>
<circle cx="53.1" cy="34.1" r="0.53" fill="#d4daf6" opacity="0.85"/>
<circle cx="55.5" cy="12.2" r="0.44" fill="#d4daf6" opacity="0.51"/>
<circle cx="49.3" cy="2.7" r="0.54" fill="#d4daf6" opacity="0.51"/>
<circle cx="49.1" cy="22.9" r="0.57" fill="#d4daf6" opacity="0.84"/>
<circle cx="0.7" cy="38.7" r="0.54" fill="#d4daf6" opacity="0.70"/>
<circle cx="66.5" cy="38.7" r="0.50" fill="#d4daf6" opacity="0.64"/>
<circle cx="96.1" cy="3.5" r="0.60" fill="#d4daf6" opacity="0.74"/>
<circle cx="2.9" cy="28.0" r="0.62" fill="#d4daf6" opacity="0.87"/>
<circle cx="33.0" cy="45.2" r="0.55" fill="#d4daf6" opacity="0.67"/>
<circle cx="89.8" cy="1.6" r="0.64" fill="#d4daf6" opacity="0.73"/>
<circle cx="33.9" cy="39.6" r="0.50" fill="#d4daf6" opacity="0.66"/>
<circle cx="52.6" cy="35.4" r="0.43" fill="#d4daf6" opacity="0.65"/>
<circle cx="42.2" cy="25.5" r="0.68" fill="#d4daf6" opacity="0.58"/>
<circle cx="82.8" cy="18.6" r="0.55" fill="#d4daf6" opacity="0.57"/>
<circle cx="50.6" cy="44.8" r="0.61" fill="#d4daf6" opacity="0.81"/>
<circle cx="33.1" cy="14.6" r="0.47" fill="#d4daf6" opacity="0.71"/>
<circle cx="63.5" cy="36.1" r="0.37" fill="#d4daf6" opacity="0.78"/>
<circle cx="88.6" cy="25.1" r="0.37" fill="#d4daf6" opacity="0.59"/>
<circle cx="0.6" cy="8.7" r="0.72" fill="#d4daf6" opacity="0.72"/>
<circle cx="65.8" cy="36.3" r="0.71" fill="#d4daf6" opacity="0.73"/>
<circle cx="61.7" cy="28.8" r="0.63" fill="#d4daf6" opacity="0.72"/>
<circle cx="68.1" cy="9.8" r="0.62" fill="#d4daf6" opacity="0.66"/>
<circle cx="76.3" cy="4.7" r="0.42" fill="#d4daf6" opacity="0.47"/>
<circle cx="77.5" cy="42.0" r="0.61" fill="#d4daf6" opacity="0.62"/>
<circle cx="82.3" cy="36.2" r="0.57" fill="#d4daf6" opacity="0.57"/>
<circle cx="30.2" cy="19.4" r="0.48" fill="#d4daf6" opacity="0.64"/>
<circle cx="64.2" cy="43.0" r="0.37" fill="#d4daf6" opacity="0.71"/>
<circle cx="3.9" cy="5.5" r="0.67" fill="#d4daf6" opacity="0.71"/>
<circle cx="91.9" cy="20.5" r="0.36" fill="#d4daf6" opacity="0.62"/>
<circle cx="59.2" cy="43.1" r="0.74" fill="#d4daf6" opacity="0.66"/>
<circle cx="41.2" cy="4.7" r="0.61" fill="#d4daf6" opacity="0.55"/>
<circle cx="15.2" cy="0.7" r="0.35" fill="#d4daf6" opacity="0.76"/>
<circle cx="12.2" cy="44.5" r="0.39" fill="#d4daf6" opacity="0.84"/>
<circle cx="12.9" cy="0.8" r="0.64" fill="#d4daf6" opacity="0.56"/>
<circle cx="73.4" cy="8.6" r="0.37" fill="#d4daf6" opacity="0.80"/>
<circle cx="71.4" cy="39.4" r="0.64" fill="#d4daf6" opacity="0.49"/>
<circle cx="62.9" cy="32.6" r="0.53" fill="#d4daf6" opacity="0.87"/>
<circle cx="25.4" cy="44.4" r="0.64" fill="#d4daf6" opacity="0.46"/>
<circle cx="1.5" cy="29.9" r="0.68" fill="#d4daf6" opacity="0.49"/>
<circle cx="31.1" cy="33.6" r="0.42" fill="#d4daf6" opacity="0.84"/>
<circle cx="48.6" cy="2.7" r="0.50" fill="#d4daf6" opacity="0.71"/>
<circle cx="43.9" cy="31.1" r="0.41" fill="#d4daf6" opacity="0.81"/>
<circle cx="36.3" cy="29.7" r="0.60" fill="#d4daf6" opacity="0.64"/>
<circle cx="38.6" cy="36.2" r="0.73" fill="#d4daf6" opacity="0.80"/>
<circle cx="56.7" cy="13.4" r="0.37" fill="#d4daf6" opacity="0.89"/>
<circle cx="70.3" cy="38.1" r="0.48" fill="#d4daf6" opacity="0.72"/>
<circle cx="97.7" cy="38.2" r="0.59" fill="#d4daf6" opacity="0.59"/>
<circle cx="42.9" cy="40.9" r="0.50" fill="#d4daf6" opacity="0.76"/>
<circle cx="60.2" cy="41.2" r="0.67" fill="#d4daf6" opacity="0.58"/>
<circle cx="0.2" cy="12.1" r="0.52" fill="#d4daf6" opacity="0.71"/>
<circle cx="81.6" cy="40.8" r="0.37" fill="#d4daf6" opacity="0.82"/>
<circle cx="81.2" cy="39.9" r="0.58" fill="#d4daf6" opacity="0.57"/>
<circle cx="85.1" cy="37.1" r="0.62" fill="#d4daf6" opacity="0.86"/>
<circle cx="34.7" cy="3.9" r="0.57" fill="#d4daf6" opacity="0.81"/>
<circle cx="20.0" cy="34.5" r="0.72" fill="#d4daf6" opacity="0.56"/>
<circle cx="60.7" cy="31.2" r="0.54" fill="#d4daf6" opacity="0.54"/>
<circle cx="25.5" cy="34.6" r="0.67" fill="#d4daf6" opacity="0.66"/>
<circle cx="8.8" cy="37.1" r="0.66" fill="#d4daf6" opacity="0.55"/>
<circle cx="58.0" cy="41.3" r="0.70" fill="#d4daf6" opacity="0.68"/>
<circle cx="47.7" cy="27.1" r="0.43" fill="#d4daf6" opacity="0.54"/>
<circle cx="18.1" cy="32.2" r="0.50" fill="#d4daf6" opacity="0.70"/>
<circle cx="40.2" cy="23.8" r="0.41" fill="#d4daf6" opacity="0.47"/>
<circle cx="99.7" cy="17.2" r="0.39" fill="#d4daf6" opacity="0.73"/>
<circle cx="78.7" cy="7.2" r="0.59" fill="#d4daf6" opacity="0.61"/>
<circle cx="51.9" cy="0.9" r="0.36" fill="#d4daf6" opacity="0.90"/>
<circle cx="86.6" cy="22.4" r="0.58" fill="#d4daf6" opacity="0.57"/>
<circle cx="77.9" cy="19.6" r="0.73" fill="#d4daf6" opacity="0.80"/>
<circle cx="81.9" cy="44.3" r="0.45" fill="#d4daf6" opacity="0.47"/>
<circle cx="20.1" cy="8.3" r="0.38" fill="#d4daf6" opacity="0.47"/>
<circle cx="55.7" cy="40.1" r="0.53" fill="#d4daf6" opacity="0.88"/>
<circle cx="91.0" cy="3.0" r="0.59" fill="#d4daf6" opacity="0.63"/>
<circle cx="12.0" cy="44.1" r="0.45" fill="#d4daf6" opacity="0.70"/>
<circle cx="64.1" cy="44.0" r="0.62" fill="#d4daf6" opacity="0.63"/>
<circle cx="44.8" cy="7.3" r="0.74" fill="#d4daf6" opacity="0.90"/>
<circle cx="22.2" cy="1.8" r="0.45" fill="#d4daf6" opacity="0.61"/>
<circle cx="90.3" cy="41.6" r="0.68" fill="#d4daf6" opacity="0.47"/>
<circle cx="78.6" cy="32.6" r="0.61" fill="#d4daf6" opacity="0.89"/>
<circle cx="5.6" cy="6.7" r="0.65" fill="#d4daf6" opacity="0.87"/>
<circle cx="67.7" cy="13.7" r="0.59" fill="#d4daf6" opacity="0.79"/>
<circle cx="10.5" cy="14.9" r="0.45" fill="#d4daf6" opacity="0.51"/>
<circle cx="48.1" cy="7.8" r="0.45" fill="#d4daf6" opacity="0.51"/>
<circle cx="67.8" cy="0.6" r="0.64" fill="#d4daf6" opacity="0.54"/>
<circle cx="3.6" cy="42.7" r="0.44" fill="#d4daf6" opacity="0.87"/>
<circle cx="86.7" cy="40.9" r="0.41" fill="#d4daf6" opacity="0.65"/>
<circle cx="9.7" cy="42.7" r="0.69" fill="#d4daf6" opacity="0.73"/>
<circle cx="45.2" cy="15.6" r="0.68" fill="#d4daf6" opacity="0.66"/>
<circle cx="62.8" cy="6.6" r="0.44" fill="#d4daf6" opacity="0.48"/>
<circle cx="71.4" cy="25.5" r="0.41" fill="#d4daf6" opacity="0.84"/>
<circle cx="26.6" cy="18.9" r="0.41" fill="#d4daf6" opacity="0.57"/>
<circle cx="84.0" cy="15.4" r="0.42" fill="#d4daf6" opacity="0.67"/>
<circle cx="31.8" cy="41.5" r="0.40" fill="#d4daf6" opacity="0.89"/>
<circle cx="5.7" cy="41.2" r="0.62" fill="#d4daf6" opacity="0.55"/>
<circle cx="47.7" cy="13.2" r="0.45" fill="#d4daf6" opacity="0.54"/>
<circle cx="36.4" cy="45.6" r="0.75" fill="#d4daf6" opacity="0.87"/>
<circle cx="9.8" cy="13.3" r="0.71" fill="#d4daf6" opacity="0.48"/>
<circle cx="72.6" cy="13.5" r="0.74" fill="#d4daf6" opacity="0.46"/>
<circle cx="80.7" cy="15.7" r="0.41" fill="#d4daf6" opacity="0.45"/>
<circle cx="83.2" cy="24.2" r="0.42" fill="#d4daf6" opacity="0.65"/>
<circle cx="91.2" cy="10.0" r="0.58" fill="#d4daf6" opacity="0.51"/>
<circle cx="18.0" cy="35.4" r="0.63" fill="#d4daf6" opacity="0.54"/>
<circle cx="7.9" cy="4.0" r="0.59" fill="#d4daf6" opacity="0.67"/>
<circle cx="27.4" cy="9.5" r="0.59" fill="#d4daf6" opacity="0.77"/>
<circle cx="81.2" cy="26.8" r="0.43" fill="#d4daf6" opacity="0.48"/>
<circle cx="73.3" cy="18.8" r="0.64" fill="#d4daf6" opacity="0.47"/>
<circle cx="81.1" cy="15.4" r="0.69" fill="#d4daf6" opacity="0.84"/>
<circle cx="49.3" cy="0.7" r="0.71" fill="#d4daf6" opacity="0.66"/>
<circle cx="87.2" cy="12.2" r="0.42" fill="#d4daf6" opacity="0.82"/>
<circle cx="36.7" cy="7.5" r="0.50" fill="#d4daf6" opacity="0.72"/>
<circle cx="0.5" cy="23.9" r="0.53" fill="#d4daf6" opacity="0.68"/>
<circle cx="12.1" cy="32.9" r="0.68" fill="#d4daf6" opacity="0.84"/>
<circle cx="32.1" cy="32.7" r="0.50" fill="#d4daf6" opacity="0.79"/>
<circle cx="6.1" cy="40.1" r="0.73" fill="#d4daf6" opacity="0.67"/>
<circle cx="51.3" cy="24.4" r="0.56" fill="#d4daf6" opacity="0.46"/>
<circle cx="96.7" cy="10.3" r="0.42" fill="#d4daf6" opacity="0.50"/>
<circle cx="25.0" cy="37.6" r="0.36" fill="#d4daf6" opacity="0.49"/>
<circle cx="69.9" cy="9.0" r="0.36" fill="#d4daf6" opacity="0.72"/>
<circle cx="57.6" cy="24.1" r="0.63" fill="#d4daf6" opacity="0.50"/>
<circle cx="87.0" cy="33.0" r="0.37" fill="#d4daf6" opacity="0.51"/>
<circle cx="49.4" cy="23.0" r="0.46" fill="#d4daf6" opacity="0.50"/>
<circle cx="40.6" cy="6.3" r="0.59" fill="#d4daf6" opacity="0.84"/>
<circle cx="14.7" cy="26.4" r="0.65" fill="#d4daf6" opacity="0.52"/>
<circle cx="82.6" cy="43.1" r="0.51" fill="#d4daf6" opacity="0.64"/>
<circle cx="84.0" cy="24.2" r="0.51" fill="#d4daf6" opacity="0.87"/>
<circle cx="77.7" cy="15.6" r="0.45" fill="#d4daf6" opacity="0.60"/>
<circle cx="43.6" cy="45.1" r="0.67" fill="#d4daf6" opacity="0.86"/>
<circle cx="81.5" cy="39.0" r="0.37" fill="#d4daf6" opacity="0.68"/>
<circle cx="95.8" cy="43.0" r="0.45" fill="#d4daf6" opacity="0.64"/>
<circle cx="63.3" cy="16.8" r="0.56" fill="#d4daf6" opacity="0.48"/>
<circle cx="43.3" cy="23.2" r="0.36" fill="#d4daf6" opacity="0.51"/>
<circle cx="97.0" cy="35.7" r="0.72" fill="#d4daf6" opacity="0.73"/>
<circle cx="80.9" cy="40.7" r="0.70" fill="#d4daf6" opacity="0.47"/>
<circle cx="64.2" cy="12.2" r="0.62" fill="#d4daf6" opacity="0.57"/>
<circle cx="54.2" cy="42.5" r="0.60" fill="#d4daf6" opacity="0.56"/>
<circle cx="52.0" cy="19.9" r="0.73" fill="#d4daf6" opacity="0.58"/>
<circle cx="30.5" cy="29.8" r="0.40" fill="#d4daf6" opacity="0.72"/>
<circle cx="95.6" cy="23.6" r="0.46" fill="#d4daf6" opacity="0.66"/>
<circle cx="53.4" cy="6.8" r="0.40" fill="#d4daf6" opacity="0.51"/>
<circle cx="29.4" cy="18.7" r="0.47" fill="#d4daf6" opacity="0.56"/>
<circle cx="8.8" cy="25.1" r="0.69" fill="#d4daf6" opacity="0.72"/>
<circle cx="57.0" cy="29.9" r="0.43" fill="#d4daf6" opacity="0.77"/>
<circle cx="46.1" cy="25.2" r="0.60" fill="#d4daf6" opacity="0.66"/>
<circle cx="31.1" cy="11.1" r="0.44" fill="#d4daf6" opacity="0.68"/>
<circle cx="38.3" cy="26.9" r="0.35" fill="#d4daf6" opacity="0.61"/>
<circle cx="86.2" cy="11.0" r="0.57" fill="#d4daf6" opacity="0.67"/>
<circle cx="28.5" cy="45.4" r="0.47" fill="#d4daf6" opacity="0.80"/>
<circle cx="15.9" cy="3.1" r="0.70" fill="#d4daf6" opacity="0.65"/>
<circle cx="6.2" cy="17.8" r="0.53" fill="#d4daf6" opacity="0.78"/>
<circle cx="10.9" cy="10.4" r="0.73" fill="#d4daf6" opacity="0.78"/>
<circle cx="15.5" cy="15.5" r="0.49" fill="#d4daf6" opacity="0.75"/>
<circle cx="61.6" cy="39.1" r="0.68" fill="#d4daf6" opacity="0.68"/>
<circle cx="73.9" cy="34.2" r="0.65" fill="#d4daf6" opacity="0.66"/>
<circle cx="78.5" cy="32.6" r="0.72" fill="#d4daf6" opacity="0.51"/>
<circle cx="87.1" cy="0.2" r="0.66" fill="#d4daf6" opacity="0.71"/>
<circle cx="49.8" cy="44.3" r="0.58" fill="#d4daf6" opacity="0.64"/>
<circle cx="78.4" cy="40.1" r="0.59" fill="#d4daf6" opacity="0.62"/>
<circle cx="45.2" cy="21.1" r="0.64" fill="#d4daf6" opacity="0.58"/>
<circle cx="39.1" cy="25.5" r="0.50" fill="#d4daf6" opacity="0.59"/>
<circle cx="78.7" cy="39.1" r="0.55" fill="#d4daf6" opacity="0.65"/>
<circle cx="18.4" cy="14.0" r="0.41" fill="#d4daf6" opacity="0.71"/>
<circle cx="58.2" cy="4.0" r="0.72" fill="#d4daf6" opacity="0.60"/>
<circle cx="84.3" cy="38.6" r="0.73" fill="#d4daf6" opacity="0.54"/>
<circle cx="42.6" cy="41.9" r="0.35" fill="#d4daf6" opacity="0.47"/>
<circle cx="56.5" cy="22.9" r="0.72" fill="#d4daf6" opacity="0.80"/>
<circle cx="53.8" cy="45.9" r="0.56" fill="#d4daf6" opacity="0.68"/>
<circle cx="68.5" cy="17.9" r="0.49" fill="#d4daf6" opacity="0.72"/>
<circle cx="35.1" cy="43.6" r="0.62" fill="#d4daf6" opacity="0.69"/>
<circle cx="9.9" cy="17.2" r="0.51" fill="#d4daf6" opacity="0.70"/>
<circle cx="57.4" cy="40.5" r="0.74" fill="#d4daf6" opacity="0.67"/>
<circle cx="44.0" cy="28.7" r="0.75" fill="#d4daf6" opacity="0.60"/>
<circle cx="53.0" cy="37.5" r="0.42" fill="#d4daf6" opacity="0.59"/>
<circle cx="97.8" cy="38.0" r="0.56" fill="#d4daf6" opacity="0.50"/>
<circle cx="89.5" cy="31.7" r="0.68" fill="#d4daf6" opacity="0.90"/>
<circle cx="88.8" cy="19.4" r="0.41" fill="#d4daf6" opacity="0.58"/>
<circle cx="51.2" cy="23.2" r="0.43" fill="#d4daf6" opacity="0.53"/>
<circle cx="63.0" cy="27.7" r="0.49" fill="#d4daf6" opacity="0.90"/>
<circle cx="63.7" cy="1.9" r="0.51" fill="#d4daf6" opacity="0.80"/>
<circle cx="30.7" cy="31.8" r="0.35" fill="#d4daf6" opacity="0.59"/>
<circle cx="84.2" cy="27.0" r="0.62" fill="#d4daf6" opacity="0.54"/>
<circle cx="49.8" cy="25.4" r="0.46" fill="#d4daf6" opacity="0.74"/>
<circle cx="53.1" cy="45.9" r="0.58" fill="#d4daf6" opacity="0.63"/>
<circle cx="12.2" cy="7.2" r="0.65" fill="#d4daf6" opacity="0.50"/>
<circle cx="10.0" cy="7.8" r="0.56" fill="#d4daf6" opacity="0.82"/>
<circle cx="61.3" cy="37.1" r="0.37" fill="#d4daf6" opacity="0.46"/>
<circle cx="77.1" cy="14.8" r="0.64" fill="#d4daf6" opacity="0.61"/>
<circle cx="16.9" cy="12.3" r="0.39" fill="#d4daf6" opacity="0.86"/>
<circle cx="58.2" cy="16.0" r="0.53" fill="#d4daf6" opacity="0.62"/>
<circle cx="5.5" cy="41.0" r="0.58" fill="#d4daf6" opacity="0.88"/>
<circle cx="44.0" cy="28.5" r="0.45" fill="#d4daf6" opacity="0.47"/>
<circle cx="93.1" cy="39.3" r="0.48" fill="#d4daf6" opacity="0.85"/>
<circle cx="81.6" cy="14.0" r="0.59" fill="#d4daf6" opacity="0.88"/>
<circle cx="49.6" cy="43.7" r="0.45" fill="#d4daf6" opacity="0.63"/>
<circle cx="71.8" cy="10.2" r="0.47" fill="#d4daf6" opacity="0.84"/>
<circle cx="48.4" cy="36.5" r="0.45" fill="#d4daf6" opacity="0.53"/>
<circle cx="35.8" cy="8.6" r="0.74" fill="#d4daf6" opacity="0.58"/>
<circle cx="56.2" cy="5.3" r="0.56" fill="#d4daf6" opacity="0.62"/>
<circle cx="40.3" cy="3.0" r="0.40" fill="#d4daf6" opacity="0.82"/>
<circle cx="35.1" cy="11.3" r="0.43" fill="#d4daf6" opacity="0.58"/>
<circle cx="23.7" cy="1.6" r="0.62" fill="#d4daf6" opacity="0.60"/>
<circle cx="15.6" cy="32.5" r="0.39" fill="#d4daf6" opacity="0.57"/>
<circle cx="83.5" cy="5.9" r="0.53" fill="#d4daf6" opacity="0.83"/>
<circle cx="80.5" cy="7.3" r="0.49" fill="#d4daf6" opacity="0.78"/>
<circle cx="37.7" cy="44.1" r="0.43" fill="#d4daf6" opacity="0.88"/>
<circle cx="50.5" cy="10.5" r="0.53" fill="#d4daf6" opacity="0.51"/>
<circle cx="70.6" cy="12.0" r="0.71" fill="#d4daf6" opacity="0.71"/>
<circle cx="36.8" cy="11.3" r="0.59" fill="#d4daf6" opacity="0.55"/>
<circle cx="87.2" cy="5.6" r="0.56" fill="#d4daf6" opacity="0.69"/>
<circle cx="27.0" cy="35.5" r="0.50" fill="#d4daf6" opacity="0.75"/>
<circle cx="56.8" cy="14.3" r="0.51" fill="#d4daf6" opacity="0.49"/>
<circle cx="17.7" cy="39.1" r="0.48" fill="#d4daf6" opacity="0.75"/>
<circle cx="10.9" cy="25.9" r="0.49" fill="#d4daf6" opacity="0.68"/>
<circle cx="29.7" cy="3.0" r="0.47" fill="#d4daf6" opacity="0.55"/>
<circle cx="12.6" cy="33.0" r="0.46" fill="#d4daf6" opacity="0.63"/>
<circle cx="90.9" cy="35.6" r="0.70" fill="#d4daf6" opacity="0.84"/>
<circle cx="13.2" cy="12.7" r="0.36" fill="#d4daf6" opacity="0.76"/>
<circle cx="66.4" cy="16.2" r="0.52" fill="#d4daf6" opacity="0.75"/>
<circle cx="69.9" cy="11.4" r="0.69" fill="#d4daf6" opacity="0.61"/>
<circle cx="62.9" cy="8.4" r="0.40" fill="#d4daf6" opacity="0.86"/>
<circle cx="73.4" cy="32.8" r="0.37" fill="#d4daf6" opacity="0.47"/>
<circle cx="16.2" cy="9.1" r="0.47" fill="#d4daf6" opacity="0.62"/>
<circle cx="3.9" cy="14.3" r="0.61" fill="#d4daf6" opacity="0.53"/>
<circle cx="83.9" cy="26.2" r="0.64" fill="#d4daf6" opacity="0.56"/>
<circle cx="43.5" cy="31.5" r="0.49" fill="#d4daf6" opacity="0.45"/>
<circle cx="83.4" cy="35.7" r="0.46" fill="#d4daf6" opacity="0.47"/>
<circle cx="85.4" cy="27.9" r="0.37" fill="#d4daf6" opacity="0.56"/>
<circle cx="11.1" cy="36.4" r="0.43" fill="#d4daf6" opacity="0.86"/>
<circle cx="75.0" cy="4.0" r="0.63" fill="#d4daf6" opacity="0.63"/>
<circle cx="74.8" cy="38.1" r="0.46" fill="#d4daf6" opacity="0.49"/>
<circle cx="94.6" cy="19.5" r="0.72" fill="#d4daf6" opacity="0.76"/>
<circle cx="73.9" cy="38.2" r="0.60" fill="#d4daf6" opacity="0.65"/>
<circle cx="5.4" cy="32.1" r="0.52" fill="#d4daf6" opacity="0.68"/>
<circle cx="92.8" cy="5.9" r="0.65" fill="#d4daf6" opacity="0.47"/>
<circle cx="70.3" cy="37.1" r="0.45" fill="#d4daf6" opacity="0.70"/>
<circle cx="96.9" cy="29.3" r="0.57" fill="#d4daf6" opacity="0.56"/>
<circle cx="5.9" cy="16.5" r="0.51" fill="#d4daf6" opacity="0.54"/>
<circle cx="31.1" cy="6.3" r="0.63" fill="#d4daf6" opacity="0.75"/>
<circle cx="23.8" cy="11.1" r="0.56" fill="#d4daf6" opacity="0.65"/>
<circle cx="93.6" cy="16.2" r="0.47" fill="#d4daf6" opacity="0.85"/>
<circle cx="14.2" cy="25.9" r="0.48" fill="#d4daf6" opacity="0.82"/>
<circle cx="54.8" cy="35.0" r="0.42" fill="#d4daf6" opacity="0.75"/>
<circle cx="59.9" cy="21.2" r="0.66" fill="#d4daf6" opacity="0.82"/>
<circle cx="11.4" cy="13.3" r="0.49" fill="#d4daf6" opacity="0.54"/>
<circle cx="6.0" cy="12.9" r="0.43" fill="#d4daf6" opacity="0.77"/>
<circle cx="44.8" cy="5.2" r="0.48" fill="#d4daf6" opacity="0.66"/>
<circle cx="36.3" cy="7.7" r="0.38" fill="#d4daf6" opacity="0.45"/>
<circle cx="99.2" cy="34.5" r="0.38" fill="#d4daf6" opacity="0.77"/>
<circle cx="98.0" cy="25.9" r="0.39" fill="#d4daf6" opacity="0.67"/>
<circle cx="43.4" cy="8.7" r="0.57" fill="#d4daf6" opacity="0.45"/>
<circle cx="92.0" cy="29.6" r="0.60" fill="#d4daf6" opacity="0.87"/>
<circle cx="65.3" cy="11.6" r="0.45" fill="#d4daf6" opacity="0.51"/>
<circle cx="2.8" cy="35.6" r="0.69" fill="#d4daf6" opacity="0.58"/>
<circle cx="18.6" cy="29.4" r="0.69" fill="#d4daf6" opacity="0.87"/>
<circle cx="16.8" cy="36.1" r="0.68" fill="#d4daf6" opacity="0.78"/>
<circle cx="32.7" cy="8.5" r="0.68" fill="#d4daf6" opacity="0.59"/>
<circle cx="36.9" cy="25.4" r="0.50" fill="#d4daf6" opacity="0.82"/>
<circle cx="23.9" cy="1.9" r="0.58" fill="#d4daf6" opacity="0.73"/>
<circle cx="82.0" cy="32.5" r="0.71" fill="#d4daf6" opacity="0.88"/>
<circle cx="49.4" cy="23.0" r="0.41" fill="#d4daf6" opacity="0.58"/>
<circle cx="58.1" cy="3.7" r="0.63" fill="#d4daf6" opacity="0.52"/>
<circle cx="44.3" cy="44.6" r="0.39" fill="#d4daf6" opacity="0.47"/>
<circle cx="44.0" cy="8.8" r="0.64" fill="#d4daf6" opacity="0.45"/>
<circle cx="84.1" cy="39.3" r="0.66" fill="#d4daf6" opacity="0.64"/>
<circle cx="28.3" cy="30.4" r="0.56" fill="#d4daf6" opacity="0.64"/>
<circle cx="33.9" cy="20.2" r="0.62" fill="#d4daf6" opacity="0.82"/>
<circle cx="90.4" cy="7.6" r="0.47" fill="#d4daf6" opacity="0.65"/>
<circle cx="56.3" cy="16.0" r="0.43" fill="#d4daf6" opacity="0.49"/>
<circle cx="32.4" cy="21.2" r="0.74" fill="#d4daf6" opacity="0.86"/>
<circle cx="86.5" cy="44.8" r="0.73" fill="#d4daf6" opacity="0.73"/>
<circle cx="81.1" cy="2.8" r="0.62" fill="#d4daf6" opacity="0.72"/>
<circle cx="29.7" cy="26.3" r="0.73" fill="#d4daf6" opacity="0.67"/>
<circle cx="64.7" cy="13.8" r="0.49" fill="#d4daf6" opacity="0.85"/>
<circle cx="2.8" cy="8.7" r="0.62" fill="#d4daf6" opacity="0.65"/>
<circle cx="8.5" cy="30.4" r="0.50" fill="#d4daf6" opacity="0.71"/>
<circle cx="41.6" cy="24.4" r="0.58" fill="#d4daf6" opacity="0.63"/>
<circle cx="11.4" cy="8.3" r="0.71" fill="#d4daf6" opacity="0.70"/>
<circle cx="11.2" cy="39.7" r="0.45" fill="#d4daf6" opacity="0.49"/>
<circle cx="53.1" cy="11.6" r="0.55" fill="#d4daf6" opacity="0.70"/>
<circle cx="22.7" cy="26.3" r="0.40" fill="#d4daf6" opacity="0.68"/>
<circle cx="58.8" cy="3.7" r="0.51" fill="#d4daf6" opacity="0.48"/>
<circle cx="44.0" cy="39.7" r="0.57" fill="#d4daf6" opacity="0.77"/>
<circle cx="75.7" cy="5.3" r="0.75" fill="#d4daf6" opacity="0.77"/>
<circle cx="10.2" cy="38.2" r="0.51" fill="#d4daf6" opacity="0.53"/>
    </g>
    <circle cx="31" cy="21" r="6" fill="#101530"/>
    <circle cx="31" cy="21" r="8" fill="none" stroke="#2a3058" stroke-width="2.5" opacity=".8"/>
  </svg>
</div>
<div id="dialog" class="abs"></div>
<!-- BOTTOM BAR -->
<div class="abs" style="left:824px;top:788px;width:470px;height:40px;background:#2b2a2c;border:1px solid #3a393b;border-radius:9px"></div>
<div class="abs" style="left:832px;top:800px;width:16px;height:16px;border-radius:50%;background:#565557"></div>
<svg style="left:838px;top:804px" width="5" height="8" viewBox="0 0 5 8"><path class="ic" d="M0.8 0.8 L4 4 L0.8 7.2" style="stroke-width:1.1;stroke:#cfcfcf"/></svg>
<svg style="left:862px;top:800px" width="21" height="17" viewBox="0 0 21 17"><path class="ic" d="M10.5 2.5 Q6 0.8 1 1.5 V15.5 Q6 14.8 10.5 16 Q15 14.8 20 15.5 V1.5 Q15 0.8 10.5 2.5 Z M10.5 2.5 V16 M4 5 H8 M4 8 H8 M4 11 H6 M13 5 H17 M13 8 H17 M13 11 H15" style="stroke-width:1.2"/></svg>
<svg style="left:903px;top:800px" width="22" height="18" viewBox="0 0 22 18"><path class="ic" d="M7 13 H4 Q1 13 1 10 V4 Q1 1 4 1 H18 Q21 1 21 4 V10 Q21 13 18 13 H15 M11 12.5 L14 17 H8 Z" style="stroke-width:1.2"/></svg>
<div class="abs" style="left:939px;top:802px;width:1px;height:12px;background:#4a494b"></div>
<div class="abs" style="left:948px;top:792px;width:33px;height:33px;background:#1e1d1f;border:1.3px solid #6262c0;border-radius:8px"></div>
<div class="t" style="left:959px;top:802px;font-size:16px;color:#ececec">1</div>
<div class="abs" style="left:986px;top:792px;width:31px;height:33px;background:#1e1d1f;border-radius:8px"></div>
<div class="t" style="left:996px;top:802px;font-size:16px;color:#ececec">2</div>
<svg style="left:1036px;top:805px" width="11" height="7" viewBox="0 0 11 7"><path class="ic" d="M0.8 6 L5.5 1 L10.2 6" style="stroke-width:1.2;stroke:#555"/></svg>
<svg style="left:1077px;top:805px" width="12" height="8" viewBox="0 0 12 8"><path class="ic" d="M0.8 1 L6 6.5 L11.2 1" style="stroke-width:1.3;stroke:#d0d0d0"/></svg>
<div class="abs" style="left:1108px;top:802px;width:1px;height:12px;background:#4a494b"></div>
<div class="abs" style="left:1118px;top:795px;width:48px;height:26px;background:#1e1d1f;border-radius:7px"></div>
<div class="t" style="left:1127px;top:802px;font-size:12px;color:#e0e0e0;letter-spacing:-0.2px">100%</div>
<div class="abs" style="left:1184px;top:808px;width:13px;height:1.3px;background:#d8d8d8"></div>
<svg style="left:1225px;top:802px" width="13" height="13" viewBox="0 0 13 13"><path class="ic" d="M6.5 0.5 V12.5 M0.5 6.5 H12.5" style="stroke-width:1.3"/></svg>
<svg style="left:1263px;top:799px" width="20" height="18" viewBox="0 0 20 18"><rect class="ic" x="0.8" y="0.8" width="18.4" height="16.4" rx="3" style="stroke-width:1.2"/><path class="ic" d="M6 5.5 V12.5 M14 5.5 V12.5 M5 6.3 L6 5.5 M13 6.3 L14 5.5" style="stroke-width:1.2"/><circle cx="10" cy="7.3" r="0.8" fill="#dcdcdc"/><circle cx="10" cy="10.7" r="0.8" fill="#dcdcdc"/></svg>

<!-- DIALOG CONTENT -->
<div class="t" style="left:280px;top:121px;font-size:12px;color:#e4e4e4">OCR Text Recognition</div>
<svg style="left:1005px;top:120px" width="14" height="14" viewBox="0 0 14 14"><path class="ic" d="M0.7 0.7 L13.3 13.3 M13.3 0.7 L0.7 13.3" style="stroke:#c8c8c8;stroke-width:1.3"/></svg>
<div class="abs" style="left:264px;top:147px;width:768px;height:1px;background:#3d3c3e"></div>
<div class="abs" style="left:648px;top:171px;width:1px;height:462px;background:#3a393b"></div>
<div class="abs" style="left:674px;top:337px;width:334px;height:1px;background:#3b3a3c"></div>

<!-- card 1 -->
<div class="abs" style="left:289px;top:173px;width:334px;height:256px;background:#212022;border:2px solid #5f5db4;border-radius:8px"></div>
<div class="abs" style="left:305px;top:189px;width:19px;height:19px;border-radius:50%;background:#7474f4"></div>
<div class="abs" style="left:310px;top:194px;width:9px;height:9px;border-radius:50%;background:#ffffff"></div>
<div class="t" style="left:331px;top:193px;font-size:12px;font-weight:700;color:#f0f0f0;letter-spacing:-0.22px">Editable PDF (Dual-layer OCR)</div>
<div class="t" style="left:331px;top:218px;font-size:12px;color:#8a8a8a">Text over the page image</div>
<!-- illustration -->
<div class="abs" style="left:373px;top:243px;width:166px;height:166px;background-image:linear-gradient(90deg,rgba(255,255,255,.075) 1px,transparent 1px),linear-gradient(0deg,rgba(255,255,255,.075) 1px,transparent 1px);background-size:11px 11px;-webkit-mask-image:radial-gradient(circle at center,#000 45%,transparent 72%)"></div>
<div class="abs" style="left:378px;top:258px;width:157px;height:2px;background:linear-gradient(90deg,transparent,rgba(255,255,255,.35) 30%,rgba(255,255,255,.35) 70%,transparent)"></div>
<div class="abs" style="left:402px;top:258px;width:109px;height:135px;background:linear-gradient(125deg,transparent 26%,rgba(255,255,255,.18) 31%,transparent 38%),linear-gradient(50deg,transparent 50%,rgba(0,0,0,.035) 55%,transparent 62%),linear-gradient(160deg,transparent 60%,rgba(255,255,255,.15) 65%,transparent 72%),linear-gradient(160deg,#e0e0e0 0%,#d2d2d2 35%,#dcdcdc 55%,#cbcbcb 80%,#d8d8d8 100%)"></div>
<div class="abs" style="left:411px;top:270px;width:90px;height:12px;background:#c0c0c0"></div>
<div class="abs" style="left:412px;top:297px;width:39px;height:3px;background:#bdbdbd"></div>
<div class="abs" style="left:412px;top:304px;width:39px;height:3px;background:#bdbdbd"></div>
<div class="abs" style="left:412px;top:311px;width:27px;height:3px;background:#bdbdbd"></div>
<div class="abs" style="left:412px;top:328px;width:39px;height:3px;background:#bdbdbd"></div>
<div class="abs" style="left:412px;top:335px;width:39px;height:3px;background:#bdbdbd"></div>
<div class="abs" style="left:461px;top:292px;width:40px;height:43px;background:#2050b4;border-radius:2px;overflow:hidden">
  <div class="abs" style="left:15px;top:17px;width:25px;height:26px;background:#e0a04c;clip-path:polygon(0 15%,100% 0,100% 100%,0 100%)"></div>
  <div class="abs" style="left:0;top:32px;width:8px;height:11px;background:#e08a7a"></div>
  <div class="abs" style="left:8px;top:31px;width:7px;height:12px;background:#c84a3c"></div>
</div>
<div class="abs" style="left:411px;top:346px;width:41px;height:34px;background:linear-gradient(180deg,#2a6a74,#5aa0aa);border-radius:2px;overflow:hidden">
  <div class="abs" style="left:6px;top:12px;width:30px;height:15px;background:repeating-linear-gradient(90deg,#111 0 3px,#ddd 3px 6px)"></div>
  <div class="abs" style="left:6px;top:12px;width:30px;height:15px;background:repeating-linear-gradient(0deg,transparent 0 3px,#ddd 3px 5px)"></div>
  <div class="abs" style="left:4px;top:27px;width:34px;height:7px;background:#0d0d0d"></div>
</div>
<div class="abs" style="left:461px;top:347px;width:40px;height:3px;background:#bdbdbd"></div>
<div class="abs" style="left:461px;top:354px;width:40px;height:3px;background:#bdbdbd"></div>
<div class="abs" style="left:461px;top:361px;width:40px;height:3px;background:#bdbdbd"></div>
<div class="abs" style="left:461px;top:368px;width:30px;height:3px;background:#bdbdbd"></div>
<svg style="left:394px;top:251px" width="124" height="149" viewBox="0 0 124 149"><path d="M1.2 13 V4.5 Q1.2 1.2 4.5 1.2 H13 M111 1.2 H119.5 Q122.8 1.2 122.8 4.5 V13 M122.8 136 V144.5 Q122.8 147.8 119.5 147.8 H111 M13 147.8 H4.5 Q1.2 147.8 1.2 144.5 V136" fill="none" stroke="#ffffff" stroke-width="2.3" stroke-linecap="round"/></svg>

<!-- card 2 -->
<div class="abs" style="left:289px;top:449px;width:334px;height:73px;background:#212022;border:1px solid #3c3b3e;border-radius:8px"></div>
<div class="abs" style="left:305px;top:465px;width:19px;height:19px;border-radius:50%;background:#59585a;border:1px solid #6a696b"></div>
<div class="t" style="left:331px;top:469px;font-size:12px;font-weight:700;color:#f0f0f0;letter-spacing:-0.2px">Text and Pictures Only</div>
<div class="t" style="left:331px;top:494px;font-size:12px;color:#8a8a8a">Text and images are on the same layer.</div>
<!-- card 3 -->
<div class="abs" style="left:289px;top:543px;width:334px;height:72px;background:#212022;border:1px solid #3c3b3e;border-radius:8px"></div>
<div class="abs" style="left:305px;top:559px;width:19px;height:19px;border-radius:50%;background:#59585a;border:1px solid #6a696b"></div>
<div class="t" style="left:331px;top:563px;font-size:12px;font-weight:700;color:#f0f0f0;letter-spacing:-0.2px">Searchable PDF Only (Dual-layer OCR)</div>
<div class="t" style="left:331px;top:588px;font-size:12px;color:#8a8a8a">Text under the page image</div>

<!-- right column -->
<div class="t" style="left:674px;top:176px;font-size:12px;font-weight:700;color:#ececec">OCR Text Recognition</div>
<div class="abs" style="left:674px;top:197px;width:333px;height:123px;border-radius:7px;background:linear-gradient(100deg,#344a5c 0%,#3a4660 50%,#423f62 100%)"></div>
<svg style="left:687px;top:213px" width="10" height="12" viewBox="0 0 10 12"><path d="M5 0.5 Q9.5 0.5 9.5 4.8 Q9.5 7 7.3 8.5 V9.5 H2.7 V8.5 Q0.5 7 0.5 4.8 Q0.5 0.5 5 0.5 Z" fill="#f4e6b0"/><rect x="3" y="10" width="4" height="1.6" rx="0.8" fill="#d8d0b0"/></svg>
<div class="abs" style="left:707px;top:211px;font-size:12px;line-height:16.5px;color:#e4e8ef;white-space:nowrap">This mode keeps the background image and<br>illustrations of the source document and overlays the<br>recognized text. Usually, such PDF files are larger<br>than those created using the Text and pictures only<br>mode. Visually, this document may differ slightly<br>from the original.</div>

<div class="t" style="left:674px;top:358px;font-size:12px;font-weight:700;color:#ececec">Document Language</div>
<div class="abs" style="left:674px;top:381px;font-size:12px;line-height:16.5px;color:#7e7e7e;white-space:nowrap">Please correctly select the document's language type and<br>avoid selecting languages not present in the document</div>
<div class="abs" style="left:675px;top:421px;width:290px;height:31px;background:#212022;border:1px solid #3c3b3e;border-radius:8px"></div>
<div class="t" style="left:685px;top:431px;font-size:12px;color:#e8e8e8;letter-spacing:-0.3px">English,Korean and English</div>
<svg style="left:944px;top:434px" width="8" height="6" viewBox="0 0 8 6"><path class="ic" d="M0.8 1 L4 4.3 L7.2 1" style="stroke-width:1.2;stroke:#bdbdbd"/></svg>
<svg style="left:982px;top:427px" width="18" height="19" viewBox="0 0 18 19"><path class="ic" d="M1 2.5 H17 M1 9.5 H17 M1 16.5 H17" style="stroke-width:1.3"/><path d="M4 0.5 V4.5 M13 7.5 V11.5 M4 14.5 V18.5" stroke="#dcdcdc" stroke-width="2" fill="none"/></svg>

<div class="t" style="left:674px;top:498px;font-size:12px;font-weight:700;color:#ececec">Page Range</div>
<svg style="left:982px;top:494px" width="19" height="20" viewBox="0 0 19 20"><path class="ic" d="M9 18.5 H4 Q1 18.5 1 15.5 V4 Q1 1 4 1 H11 Q14 1 14 4 V10" style="stroke-width:1.3"/><path class="ic" d="M5 6 H10 M5 9.5 H9 M9.5 15.5 H18 M11.5 13.3 L9.3 15.5 L11.5 17.7 M16 13.3 L18.2 15.5 L16 17.7" style="stroke-width:1.2"/></svg>
<div class="abs" style="left:675px;top:531px;width:131px;height:31px;background:#212022;border:1px solid #3c3b3e;border-radius:8px"></div>
<div class="t" style="left:685px;top:541px;font-size:12px;color:#e8e8e8">1</div>
<svg style="left:785px;top:538px" width="8" height="16" viewBox="0 0 8 16"><path class="ic" d="M1 4.5 L4 1.5 L7 4.5 M1 11.5 L4 14.5 L7 11.5" style="stroke-width:1.1;stroke:#9a9a9a"/></svg>
<div class="abs" style="left:823px;top:547px;width:5px;height:1.4px;background:#bdbdbd"></div>
<div class="abs" style="left:845px;top:531px;width:130px;height:31px;background:#212022;border:1px solid #3c3b3e;border-radius:8px"></div>
<div class="t" style="left:855px;top:541px;font-size:12px;color:#e8e8e8">2</div>
<svg style="left:955px;top:538px" width="8" height="16" viewBox="0 0 8 16"><path class="ic" d="M1 4.5 L4 1.5 L7 4.5" style="stroke-width:1.1;stroke:#6a6a6a"/><path class="ic" d="M1 11.5 L4 14.5 L7 11.5" style="stroke-width:1.3;stroke:#d0d0d0"/></svg>
<div class="t" style="left:989px;top:541px;font-size:12px;color:#7c7c7c">/ 2</div>
<div class="abs" style="left:675px;top:574px;width:331px;height:31px;background:#212022;border:1px solid #3c3b3e;border-radius:8px"></div>
<div class="t" style="left:683px;top:584px;font-size:12px;color:#e8e8e8">All Pages</div>
<svg style="left:985px;top:587px" width="8" height="6" viewBox="0 0 8 6"><path class="ic" d="M0.8 1 L4 4.3 L7.2 1" style="stroke-width:1.2;stroke:#bdbdbd"/></svg>

<!-- buttons -->
<div class="abs" style="left:720px;top:669px;width:139px;height:32px;background:#7878f9;border-radius:7px"></div>
<div class="t" style="left:768px;top:680px;font-size:12px;color:#f4f4ff">Convert</div>
<div class="abs" style="left:868px;top:669px;width:139px;height:32px;background:#444345;border-radius:7px"></div>
<div class="t" style="left:919px;top:680px;font-size:12px;color:#e8e8e8">Cancel</div>
</body></html>
